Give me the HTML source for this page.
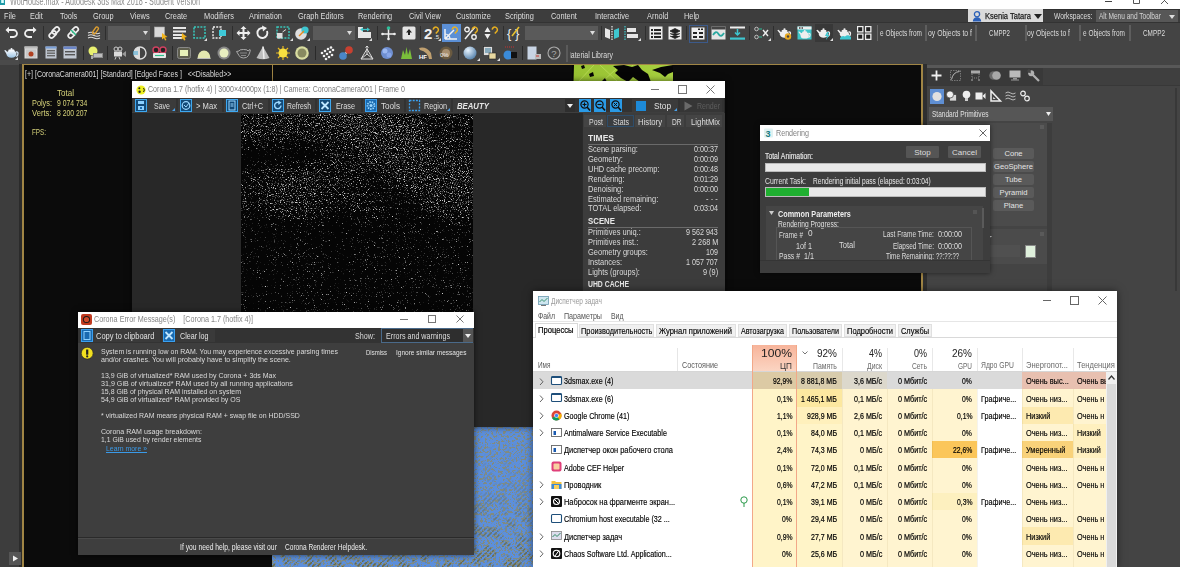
<!DOCTYPE html><html><head><meta charset="utf-8"><style>
*{margin:0;padding:0;box-sizing:border-box}
html,body{width:1180px;height:567px;overflow:hidden;background:#444;font-family:"Liberation Sans",sans-serif;position:relative}
.a{position:absolute}
.t{position:absolute;white-space:nowrap;line-height:1}
svg{overflow:visible}
</style></head><body><div class="a" style="left:0px;top:0px;width:1180px;height:9px;background:#fff;"></div>
<div class="t" style="left:10.3px;top:-3.4px;font-size:10px;color:#8c8c8c;transform:scaleX(0.722);transform-origin:0 0;">WotHouse.max - Autodesk 3ds Max 2018 - Student Version</div>
<svg class="a" style="left:0px;top:0px;" width="6" height="9" viewBox="0 0 6 9"><rect x="0" y="-3" width="5" height="8" fill="#1f9aa8"/><rect x="1.2" y="-1" width="2.6" height="4" fill="#dff"/></svg>
<svg class="a" style="left:1100px;top:0px;" width="75" height="9" viewBox="0 0 75 9"><path d="M5 1.5 H12" stroke="#444" stroke-width="1"/><path d="M33.5 -3 V3.5 H39.5 V-3" fill="none" stroke="#555" stroke-width="1"/><path d="M61 -3 L68 4 M68 -3 L61 4" stroke="#555" stroke-width="1"/></svg>
<div class="a" style="left:0px;top:9px;width:1180px;height:14px;background:#3d3d3d;"></div>
<div class="a" style="left:0px;top:9px;width:1180px;height:1px;background:#303030;"></div>
<div class="t" style="left:4px;top:11.5px;font-size:8.8px;color:#dedede;transform:scaleX(0.840);transform-origin:0 0;">File</div>
<div class="t" style="left:30px;top:11.5px;font-size:8.8px;color:#dedede;transform:scaleX(0.840);transform-origin:0 0;">Edit</div>
<div class="t" style="left:60px;top:11.5px;font-size:8.8px;color:#dedede;transform:scaleX(0.840);transform-origin:0 0;">Tools</div>
<div class="t" style="left:93px;top:11.5px;font-size:8.8px;color:#dedede;transform:scaleX(0.840);transform-origin:0 0;">Group</div>
<div class="t" style="left:130px;top:11.5px;font-size:8.8px;color:#dedede;transform:scaleX(0.840);transform-origin:0 0;">Views</div>
<div class="t" style="left:165px;top:11.5px;font-size:8.8px;color:#dedede;transform:scaleX(0.840);transform-origin:0 0;">Create</div>
<div class="t" style="left:204px;top:11.5px;font-size:8.8px;color:#dedede;transform:scaleX(0.840);transform-origin:0 0;">Modifiers</div>
<div class="t" style="left:249px;top:11.5px;font-size:8.8px;color:#dedede;transform:scaleX(0.840);transform-origin:0 0;">Animation</div>
<div class="t" style="left:298px;top:11.5px;font-size:8.8px;color:#dedede;transform:scaleX(0.840);transform-origin:0 0;">Graph Editors</div>
<div class="t" style="left:358px;top:11.5px;font-size:8.8px;color:#dedede;transform:scaleX(0.840);transform-origin:0 0;">Rendering</div>
<div class="t" style="left:409px;top:11.5px;font-size:8.8px;color:#dedede;transform:scaleX(0.840);transform-origin:0 0;">Civil View</div>
<div class="t" style="left:456px;top:11.5px;font-size:8.8px;color:#dedede;transform:scaleX(0.840);transform-origin:0 0;">Customize</div>
<div class="t" style="left:505px;top:11.5px;font-size:8.8px;color:#dedede;transform:scaleX(0.840);transform-origin:0 0;">Scripting</div>
<div class="t" style="left:551px;top:11.5px;font-size:8.8px;color:#dedede;transform:scaleX(0.840);transform-origin:0 0;">Content</div>
<div class="t" style="left:595px;top:11.5px;font-size:8.8px;color:#dedede;transform:scaleX(0.840);transform-origin:0 0;">Interactive</div>
<div class="t" style="left:647px;top:11.5px;font-size:8.8px;color:#dedede;transform:scaleX(0.840);transform-origin:0 0;">Arnold</div>
<div class="t" style="left:684px;top:11.5px;font-size:8.8px;color:#dedede;transform:scaleX(0.840);transform-origin:0 0;">Help</div>
<div class="a" style="left:968px;top:9px;width:75px;height:14px;background:#dadada;"></div>
<svg class="a" style="left:972px;top:11px;" width="10" height="11" viewBox="0 0 10 11"><circle cx="5" cy="3.2" r="2.6" fill="none" stroke="#2a5fb8" stroke-width="1.3"/><path d="M0.8 10.5 Q1 6.5 5 6.3 Q9 6.5 9.2 10.5 Z" fill="#2a5fb8"/></svg>
<div class="t" style="left:985px;top:11.5px;font-size:9px;color:#1a1a1a;transform:scaleX(0.838);transform-origin:0 0;-webkit-text-stroke:0.25px #1a1a1a">Ksenia Tatara</div>
<svg class="a" style="left:1034px;top:14px;" width="8" height="5" viewBox="0 0 8 5"><path d="M0 0 L8 0 L4 5 Z" fill="#222"/></svg>
<div class="t" style="left:1054px;top:12px;font-size:8.4px;color:#dcdcdc;transform:scaleX(0.796);transform-origin:0 0;">Workspaces:</div>
<div class="a" style="left:1096px;top:10px;width:82px;height:12px;background:#575757;"></div>
<div class="t" style="left:1099px;top:12px;font-size:8.4px;color:#d4d4d4;transform:scaleX(0.783);transform-origin:0 0;">Alt Menu and Toolbar</div>
<svg class="a" style="left:1169px;top:15px;" width="6" height="4" viewBox="0 0 6 4"><path d="M0 0 L6 0 L3 4 Z" fill="#ddd"/></svg>
<div class="a" style="left:0px;top:23px;width:1180px;height:41px;background:#444;"></div>
<div class="a" style="left:0px;top:22px;width:1180px;height:1px;background:#333;"></div>
<div class="a" style="left:0px;top:64px;width:19px;height:503px;background:#3d3d3d;"></div>
<div class="a" style="left:0px;top:60px;width:19px;height:5px;background:#4a4a4a;"></div>
<div class="a" style="left:19px;top:64px;width:3px;height:503px;background:#2b2b2b;"></div>
<svg class="a" style="left:9px;top:552px;" width="12" height="13" viewBox="0 0 12 13"><rect x="0" y="0" width="12" height="13" fill="#555"/><path d="M4 3.5 L9 6.5 L4 9.5 Z" fill="#eee"/></svg>
<div class="a" style="left:22px;top:64px;width:901px;height:503px;background:#0b0b0b;"></div>
<div class="a" style="left:22px;top:64px;width:901px;height:1px;background:#a08545;"></div>
<div class="a" style="left:22px;top:64px;width:2px;height:503px;background:#a08545;"></div>
<div class="a" style="left:921px;top:64px;width:2px;height:503px;background:#a08545;"></div>
<div class="a" style="left:272px;top:65px;width:1px;height:20px;background:#a08545;"></div>
<div class="a" style="left:923px;top:64px;width:257px;height:503px;background:#444;"></div>
<div class="a" style="left:923px;top:64px;width:4px;height:227px;background:#2f2f2f;"></div>
<svg class="a" style="left:5px;top:26px;" width="13" height="13" viewBox="0 0 13 13"><path d="M3 4 H8.5 A3.5 3.5 0 0 1 8.5 11 H5" fill="none" stroke="#eee" stroke-width="1.8"/><path d="M0.5 4 L4 0.8 L4 7.2 Z" fill="#eee"/></svg>
<svg class="a" style="left:24px;top:26px;" width="13" height="13" viewBox="0 0 13 13"><path d="M10 4 H4.5 A3.5 3.5 0 0 0 4.5 11 H8" fill="none" stroke="#eee" stroke-width="1.8"/><path d="M12.5 4 L9 0.8 L9 7.2 Z" fill="#eee"/></svg>
<div class="a" style="left:43px;top:26px;width:1px;height:14px;background:#2e2e2e;"></div>
<svg class="a" style="left:48px;top:26px;" width="13" height="13" viewBox="0 0 13 13"><g fill="none" stroke="#eee" stroke-width="1.7"><rect x="5.5" y="0.5" width="4.5" height="8" rx="2.2" transform="rotate(45 7.7 4.5)"/><rect x="2.5" y="4.5" width="4.5" height="8" rx="2.2" transform="rotate(45 4.7 8.5)"/></g></svg>
<svg class="a" style="left:67px;top:26px;" width="13" height="13" viewBox="0 0 13 13"><g fill="none" stroke="#eee" stroke-width="1.7"><rect x="5.5" y="0.5" width="4.5" height="8" rx="2.2" transform="rotate(45 7.7 4.5)"/><rect x="2.5" y="4.5" width="4.5" height="8" rx="2.2" transform="rotate(45 4.7 8.5)"/></g><path d="M4 4 L9 9" stroke="#2bbf8a" stroke-width="1.4"/></svg>
<svg class="a" style="left:87px;top:26px;" width="14" height="14" viewBox="0 0 14 14"><g fill="none" stroke="#ddd" stroke-width="1.1"><path d="M1 7 Q4 5.5 7 7 T13 7"/><path d="M1 9.5 Q4 8 7 9.5 T13 9.5"/><path d="M1 12 Q4 10.5 7 12 T13 12"/></g><rect x="7" y="0.5" width="3" height="8" rx="1.5" transform="rotate(35 8.5 4.5)" fill="none" stroke="#e0a030" stroke-width="1.4"/></svg>
<div class="a" style="left:105px;top:26px;width:1px;height:14px;background:#2e2e2e;"></div>
<div class="a" style="left:108px;top:26px;width:42px;height:14px;background:#5a5a5a;"></div>
<svg class="a" style="left:143px;top:31px;" width="5" height="4" viewBox="0 0 5 4"><path d="M0 0 L5 0 L2.5 4 Z" fill="#ddd"/></svg>
<svg class="a" style="left:154px;top:26px;" width="14" height="14" viewBox="0 0 14 14"><rect x="0.5" y="1" width="10" height="10" fill="#d8d8d8" stroke="#aaa" stroke-width="0.6"/><path d="M8 7 L13.5 11 L11 11.5 L12.5 14 L11 14.5 L10 12 L8 13.5 Z" fill="#f3b51c"/></svg>
<svg class="a" style="left:173px;top:26px;" width="14" height="14" viewBox="0 0 14 14"><g fill="#e6e6e6"><rect x="0" y="1" width="13" height="2"/><rect x="0" y="4.5" width="13" height="2"/><rect x="0" y="8" width="9" height="2"/><rect x="0" y="11" width="9" height="2"/></g><path d="M9 7 L14 11 L11.5 11.5 L12.5 14 L11 14.5 L10 12.5 L8.5 13.5 Z" fill="#f3b51c"/></svg>
<svg class="a" style="left:193px;top:26px;" width="14" height="14" viewBox="0 0 14 14"><rect x="1" y="1" width="11" height="11" fill="none" stroke="#38c4b8" stroke-width="1.6" stroke-dasharray="2 1.2"/></svg>
<svg class="a" style="left:204px;top:38px;" width="3" height="3" viewBox="0 0 3 3"><path d="M3 0 L3 3 L0 3 Z" fill="#ddd"/></svg>
<svg class="a" style="left:212px;top:26px;" width="15" height="14" viewBox="0 0 15 14"><rect x="1" y="1" width="8" height="11" fill="none" stroke="#eee" stroke-width="1.4" stroke-dasharray="2 1.2"/><rect x="7" y="4" width="7" height="6" fill="#3ec8d8"/></svg>
<div class="a" style="left:232px;top:26px;width:1px;height:14px;background:#2e2e2e;"></div>
<svg class="a" style="left:236px;top:26px;" width="15" height="14" viewBox="0 0 15 14"><g fill="#eee"><path d="M7.5 0 L10.5 3 L8.5 3 L8.5 6 L11.5 6 L11.5 4 L14.5 7 L11.5 10 L11.5 8 L8.5 8 L8.5 11 L10.5 11 L7.5 14 L4.5 11 L6.5 11 L6.5 8 L3.5 8 L3.5 10 L0.5 7 L3.5 4 L3.5 6 L6.5 6 L6.5 3 L4.5 3 Z"/></g></svg>
<svg class="a" style="left:256px;top:26px;" width="14" height="14" viewBox="0 0 14 14"><path d="M11 5 A5 5 0 1 1 7 2" fill="none" stroke="#eee" stroke-width="1.9"/><path d="M6 -0.5 L11 2 L7 5.5 Z" fill="#eee"/></svg>
<svg class="a" style="left:276px;top:26px;" width="15" height="14" viewBox="0 0 15 14"><rect x="1" y="1" width="12" height="11" fill="none" stroke="#38c4b8" stroke-width="1.5" stroke-dasharray="2 1.2"/><rect x="1" y="7" width="5.5" height="5.5" fill="#ddd"/><path d="M6.5 6 L10 3.5" stroke="#ddd" stroke-width="1"/></svg>
<svg class="a" style="left:290px;top:38px;" width="3" height="3" viewBox="0 0 3 3"><path d="M3 0 L3 3 L0 3 Z" fill="#ddd"/></svg>
<svg class="a" style="left:295px;top:26px;" width="14" height="14" viewBox="0 0 14 14"><circle cx="6" cy="8" r="5.8" fill="#dedede"/><circle cx="10" cy="4" r="3.6" fill="#3ec6d0"/><path d="M4 10 L9 5" stroke="#e88a20" stroke-width="1.5"/></svg>
<svg class="a" style="left:307px;top:38px;" width="3" height="3" viewBox="0 0 3 3"><path d="M3 0 L3 3 L0 3 Z" fill="#ddd"/></svg>
<div class="a" style="left:313px;top:26px;width:42px;height:14px;background:#5a5a5a;"></div>
<svg class="a" style="left:347px;top:31px;" width="5" height="4" viewBox="0 0 5 4"><path d="M0 0 L5 0 L2.5 4 Z" fill="#ddd"/></svg>
<svg class="a" style="left:358px;top:26px;" width="14" height="13" viewBox="0 0 14 13"><rect x="0" y="1" width="13" height="11" fill="#e6e6e6"/><rect x="5" y="1" width="8" height="5" fill="#444"/><path d="M4 3.5 H10" stroke="#3ec6c9" stroke-width="1.2"/><path d="M2 3.5 L5 1.5 L5 5.5Z M12 3.5 L9 1.5 L9 5.5Z" fill="#3ec6c9"/></svg>
<svg class="a" style="left:369px;top:38px;" width="3" height="3" viewBox="0 0 3 3"><path d="M3 0 L3 3 L0 3 Z" fill="#ddd"/></svg>
<div class="a" style="left:377px;top:26px;width:1px;height:14px;background:#2e2e2e;"></div>
<svg class="a" style="left:381px;top:26px;" width="15" height="14" viewBox="0 0 15 14"><path d="M7.5 1 V13 M1.5 8 H13.5" stroke="#eee" stroke-width="1.5"/><circle cx="7.5" cy="2" r="1.8" fill="#2dbf9a"/><circle cx="7.5" cy="13" r="1.3" fill="#eee"/><circle cx="1.5" cy="8" r="1.3" fill="#eee"/><circle cx="13.5" cy="8" r="1.3" fill="#eee"/></svg>
<svg class="a" style="left:402px;top:26px;" width="14" height="14" viewBox="0 0 14 14"><rect x="0.5" y="0.5" width="13" height="13" rx="1.5" fill="#e4e4e4"/><path d="M7 3 L10 6.5 L8 6.5 L8 9 L6 9 L6 6.5 L4 6.5 Z" fill="#222"/></svg>
<div class="a" style="left:420px;top:26px;width:1px;height:14px;background:#2e2e2e;"></div>
<svg class="a" style="left:424px;top:26px;" width="17" height="14" viewBox="0 0 17 14"><text x="0" y="13" font-family="Liberation Sans" font-weight="bold" font-size="15" fill="#eee">2</text><text x="10" y="13" font-family="Liberation Sans" font-size="6" fill="#eee">.5</text><path d="M9.2 3.6 A2.6 2.6 0 1 1 13.6 5.6 L11.8 7.6" fill="none" stroke="#e8b020" stroke-width="1.5"/></svg>
<svg class="a" style="left:438px;top:38px;" width="3" height="3" viewBox="0 0 3 3"><path d="M3 0 L3 3 L0 3 Z" fill="#ddd"/></svg>
<div class="a" style="left:442px;top:24px;width:19px;height:18px;background:#5b8fd5;"></div>
<svg class="a" style="left:444px;top:26px;" width="15" height="14" viewBox="0 0 15 14"><path d="M1 13 H13 M1 13 L1 3 M1 13 L10 4" stroke="#f2f2f2" stroke-width="1.5" fill="none"/><path d="M1 8 A5 5 0 0 1 6 13" stroke="#f2f2f2" stroke-width="1.2" fill="none"/><path d="M8.2 3.6 A2.6 2.6 0 1 1 12.6 5.6 L10.8 7.6" fill="none" stroke="#e8b020" stroke-width="1.5"/></svg>
<svg class="a" style="left:464px;top:26px;" width="15" height="14" viewBox="0 0 15 14"><circle cx="3" cy="3.5" r="2.2" fill="none" stroke="#eee" stroke-width="1.4"/><circle cx="10" cy="11" r="2.2" fill="none" stroke="#eee" stroke-width="1.4"/><path d="M1 13 L11 1" stroke="#eee" stroke-width="1.5"/><path d="M8.2 3.6 A2.6 2.6 0 1 1 12.6 5.6 L10.8 7.6" fill="none" stroke="#e8b020" stroke-width="1.5"/></svg>
<svg class="a" style="left:484px;top:26px;" width="15" height="14" viewBox="0 0 15 14"><path d="M0.5 6 L3.5 1 L6.5 6 Z M0.5 8 L3.5 13 L6.5 8 Z" fill="#eee"/><path d="M8.2 3.6 A2.6 2.6 0 1 1 12.6 5.6 L10.8 7.6" fill="none" stroke="#e8b020" stroke-width="1.5"/></svg>
<div class="a" style="left:503px;top:26px;width:1px;height:14px;background:#2e2e2e;"></div>
<svg class="a" style="left:507px;top:26px;" width="14" height="14" viewBox="0 0 14 14"><text x="0" y="12" font-family="Liberation Sans" font-size="13" fill="#eee">{</text><text x="8" y="12" font-family="Liberation Sans" font-size="13" fill="#eee">}</text><path d="M5 10 L12 1" stroke="#e8c030" stroke-width="1.6"/></svg>
<div class="a" style="left:525px;top:26px;width:73px;height:14px;background:#5a5a5a;"></div>
<svg class="a" style="left:590px;top:31px;" width="5" height="4" viewBox="0 0 5 4"><path d="M0 0 L5 0 L2.5 4 Z" fill="#ddd"/></svg>
<div class="a" style="left:601px;top:26px;width:1px;height:14px;background:#2e2e2e;"></div>
<svg class="a" style="left:604px;top:26px;" width="16" height="14" viewBox="0 0 16 14"><path d="M1 2 L6 4 L6 13 L1 11 Z" fill="#e6e6e6"/><path d="M15 2 L10 4 L10 13 L15 11 Z" fill="#3ec6d0"/><path d="M8 0 V14" stroke="#eee" stroke-width="1.2" stroke-dasharray="1.5 1"/></svg>
<svg class="a" style="left:624px;top:26px;" width="17" height="14" viewBox="0 0 17 14"><path d="M1 0 V14" stroke="#3ec6c9" stroke-width="1.2" stroke-dasharray="1.5 1"/><rect x="3" y="2" width="9" height="4" fill="#e6e6e6"/><rect x="3" y="8" width="11" height="4" fill="#e6e6e6"/></svg>
<svg class="a" style="left:638px;top:38px;" width="3" height="3" viewBox="0 0 3 3"><path d="M3 0 L3 3 L0 3 Z" fill="#ddd"/></svg>
<div class="a" style="left:645px;top:26px;width:1px;height:14px;background:#2e2e2e;"></div>
<svg class="a" style="left:649px;top:26px;" width="14" height="14" viewBox="0 0 14 14"><rect x="0.5" y="0.5" width="13" height="13" fill="#eee"/><g fill="#222"><rect x="2" y="3" width="2" height="2"/><rect x="5" y="3" width="7" height="2"/><rect x="2" y="6.5" width="2" height="2"/><rect x="5" y="6.5" width="7" height="2"/><rect x="2" y="10" width="2" height="2"/><rect x="5" y="10" width="7" height="2"/></g></svg>
<svg class="a" style="left:668px;top:26px;" width="14" height="14" viewBox="0 0 14 14"><rect x="0.5" y="0.5" width="13" height="13" fill="#eee"/><path d="M7 2.5 L12 5 L7 7.5 L2 5 Z M2 7.5 L7 10 L12 7.5 M2 10 L7 12.5 L12 10" fill="#222" stroke="#222" stroke-width="0.8"/></svg>
<div class="a" style="left:686px;top:26px;width:1px;height:14px;background:#2e2e2e;"></div>
<div class="a" style="left:689px;top:25px;width:19px;height:18px;background:#3c5a8a;"></div>
<div class="a" style="left:690px;top:26px;width:17px;height:16px;background:#444;"></div>
<svg class="a" style="left:691px;top:27px;" width="14" height="13" viewBox="0 0 14 13"><rect x="0.5" y="0.5" width="13" height="12" fill="#eee"/><rect x="7" y="1.5" width="2" height="1.5" fill="#222"/><rect x="10" y="1.5" width="2" height="1.5" fill="#222"/><rect x="2" y="5" width="4" height="2" fill="#222"/><rect x="8" y="5" width="4" height="2" fill="#222"/><rect x="2" y="9" width="4" height="2" fill="#222"/><rect x="8" y="9" width="4" height="2" fill="#222"/></svg>
<svg class="a" style="left:711px;top:26px;" width="15" height="14" viewBox="0 0 15 14"><rect x="0.5" y="0.5" width="14" height="13" fill="#e6e6e6"/><rect x="0.5" y="0.5" width="14" height="3" fill="#444"/><path d="M2 9 Q5 4 7.5 8 T13 7" fill="none" stroke="#2aa8a0" stroke-width="1.8"/></svg>
<svg class="a" style="left:730px;top:26px;" width="15" height="14" viewBox="0 0 15 14"><rect x="0" y="0.5" width="15" height="2" fill="#eee"/><rect x="0" y="11.5" width="15" height="2.2" fill="#3ec6d0"/><path d="M7.5 3 V9 M5 6.5 L7.5 9 L10 6.5" stroke="#3ec6d0" stroke-width="1.5" fill="none"/></svg>
<div class="a" style="left:749px;top:26px;width:1px;height:14px;background:#2e2e2e;"></div>
<svg class="a" style="left:754px;top:26px;" width="16" height="14" viewBox="0 0 16 14"><circle cx="2.5" cy="3" r="1.8" fill="none" stroke="#ccc" stroke-width="0.9"/><circle cx="2.5" cy="11" r="1.8" fill="none" stroke="#ccc" stroke-width="0.9"/><path d="M5 3 H8 M5 11 H8" stroke="#2dbf9a" stroke-width="1"/><path d="M9 4 L14 10 M14 4 L9 10" stroke="#eee" stroke-width="1.4"/></svg>
<svg class="a" style="left:768px;top:38px;" width="3" height="3" viewBox="0 0 3 3"><path d="M3 0 L3 3 L0 3 Z" fill="#ddd"/></svg>
<div class="a" style="left:773px;top:26px;width:1px;height:14px;background:#2e2e2e;"></div>
<svg class="a" style="left:777px;top:26px;" width="16" height="14" viewBox="0 0 16 14"><ellipse cx="7.5" cy="8.2" rx="4.6" ry="3.6" fill="#eee"/><ellipse cx="7.5" cy="4.8" rx="3" ry="1.1" fill="#eee"/><circle cx="7.5" cy="3.3" r="1.1" fill="#eee"/><path d="M3.5 8.5 L0.3 4.2 L1.5 3.8 L4.5 6.5 Z" fill="#eee"/><path d="M11.5 6 Q14.5 5.5 13 9.5 L11.5 10.5" fill="none" stroke="#eee" stroke-width="1.3"/><circle cx="11" cy="10.5" r="3.2" fill="#e8a820"/><circle cx="11" cy="10.5" r="1.2" fill="#444"/></svg>
<svg class="a" style="left:797px;top:26px;" width="15" height="14" viewBox="0 0 15 14"><rect x="0.5" y="0.5" width="14" height="13" fill="#3ec6c9"/><rect x="0.5" y="0.5" width="14" height="3" fill="#eee"/><rect x="2" y="1.3" width="1.5" height="1.4" fill="#333"/><rect x="4.5" y="1.3" width="1.5" height="1.4" fill="#333"/><g transform="translate(1,2) scale(0.9)"><ellipse cx="7.5" cy="8.2" rx="4.6" ry="3.6" fill="#eee"/><ellipse cx="7.5" cy="4.8" rx="3" ry="1.1" fill="#eee"/><circle cx="7.5" cy="3.3" r="1.1" fill="#eee"/><path d="M3.5 8.5 L0.3 4.2 L1.5 3.8 L4.5 6.5 Z" fill="#eee"/><path d="M11.5 6 Q14.5 5.5 13 9.5 L11.5 10.5" fill="none" stroke="#eee" stroke-width="1.3"/></g></svg>
<div class="a" style="left:815px;top:24px;width:18px;height:18px;background:#383838;"></div>
<svg class="a" style="left:816px;top:26px;" width="16" height="14" viewBox="0 0 16 14"><ellipse cx="7.5" cy="8.2" rx="4.6" ry="3.6" fill="#eee"/><ellipse cx="7.5" cy="4.8" rx="3" ry="1.1" fill="#eee"/><circle cx="7.5" cy="3.3" r="1.1" fill="#eee"/><path d="M3.5 8.5 L0.3 4.2 L1.5 3.8 L4.5 6.5 Z" fill="#eee"/><path d="M11.5 6 Q14.5 5.5 13 9.5 L11.5 10.5" fill="none" stroke="#eee" stroke-width="1.3"/><path d="M11 6 L9 10 L11 10 L10 14 L13.5 9 L11.5 9 L13 6 Z" fill="#3ec6d0"/></svg>
<svg class="a" style="left:830px;top:38px;" width="3" height="3" viewBox="0 0 3 3"><path d="M3 0 L3 3 L0 3 Z" fill="#ddd"/></svg>
<svg class="a" style="left:837px;top:26px;" width="15" height="14" viewBox="0 0 15 14"><ellipse cx="7.5" cy="8.2" rx="4.6" ry="3.6" fill="#eee"/><ellipse cx="7.5" cy="4.8" rx="3" ry="1.1" fill="#eee"/><circle cx="7.5" cy="3.3" r="1.1" fill="#eee"/><path d="M3.5 8.5 L0.3 4.2 L1.5 3.8 L4.5 6.5 Z" fill="#eee"/><path d="M11.5 6 Q14.5 5.5 13 9.5 L11.5 10.5" fill="none" stroke="#eee" stroke-width="1.3"/><path d="M3 12 Q5 9 8 10.5 Q11 8 14 11 L14 13.5 L3 13.5 Z" fill="#3ec6d0"/></svg>
<svg class="a" style="left:857px;top:26px;" width="15" height="14" viewBox="0 0 15 14"><g fill="#eee"><rect x="0" y="0" width="6.5" height="6.5"/><rect x="8" y="0" width="6.5" height="6.5"/><rect x="0" y="7.5" width="6.5" height="6.5"/><rect x="8" y="7.5" width="6.5" height="6.5"/></g><g fill="#222"><rect x="1.2" y="1.2" width="4" height="4"/><rect x="9.2" y="1.2" width="4" height="4"/><rect x="1.2" y="8.7" width="4" height="4"/><rect x="9.2" y="8.7" width="4" height="4"/></g></svg>
<div class="a" style="left:877px;top:25px;width:1px;height:16px;background:#666;"></div>
<div class="t" style="left:880px;top:29px;font-size:8.6px;color:#dcdcdc;transform:scaleX(0.751);transform-origin:0 0;">e Objects from</div>
<div class="t" style="left:928px;top:29px;font-size:8.6px;color:#dcdcdc;transform:scaleX(0.800);transform-origin:0 0;">oy Objects to f</div>
<div class="t" style="left:989px;top:29px;font-size:8.6px;color:#dcdcdc;transform:scaleX(0.709);transform-origin:0 0;">CMPP2</div>
<div class="t" style="left:1027px;top:29px;font-size:8.6px;color:#dcdcdc;transform:scaleX(0.782);transform-origin:0 0;">oy Objects to f</div>
<div class="t" style="left:1083px;top:29px;font-size:8.6px;color:#dcdcdc;transform:scaleX(0.751);transform-origin:0 0;">e Objects from</div>
<div class="t" style="left:1143px;top:29px;font-size:8.6px;color:#dcdcdc;transform:scaleX(0.742);transform-origin:0 0;">CMPP2</div>
<div class="a" style="left:925px;top:25px;width:1.5px;height:16px;background:#5e5e5e;"></div>
<div class="a" style="left:975px;top:25px;width:1.5px;height:16px;background:#5e5e5e;"></div>
<div class="a" style="left:1025px;top:25px;width:1.5px;height:16px;background:#5e5e5e;"></div>
<div class="a" style="left:1079px;top:25px;width:1.5px;height:16px;background:#5e5e5e;"></div>
<div class="a" style="left:1129px;top:25px;width:1.5px;height:16px;background:#5e5e5e;"></div>
<svg class="a" style="left:4px;top:46px;" width="15" height="13" viewBox="0 0 15 13"><defs><linearGradient id="tpg" x1="0" y1="0" x2="0" y2="1"><stop offset="0" stop-color="#f4f8fc"/><stop offset="1" stop-color="#9cc4e4"/></linearGradient></defs><ellipse cx="7.5" cy="8" rx="5" ry="3.8" fill="url(#tpg)"/><ellipse cx="7.5" cy="4.4" rx="3.2" ry="1.1" fill="#f4f8fc"/><circle cx="7.5" cy="3" r="1" fill="#f4f8fc"/><path d="M3 8.5 L0.2 4.5 L1.4 4 L4 6.5 Z" fill="#dde8f4"/><path d="M12 6 Q15 5.5 13.5 9.5 L12 10.5" fill="none" stroke="#cfe0f0" stroke-width="1.3"/></svg>
<svg class="a" style="left:15px;top:57px;" width="3" height="3" viewBox="0 0 3 3"><path d="M3 0 L3 3 L0 3 Z" fill="#ddd"/></svg>
<svg class="a" style="left:24px;top:46px;" width="14" height="13" viewBox="0 0 14 13"><rect x="0.5" y="0.5" width="13" height="12" fill="#d9d9d9"/><rect x="0.5" y="0.5" width="13" height="2" fill="#bbb"/><rect x="2" y="3.5" width="10" height="8" fill="#c8c8c8"/><circle cx="7" cy="8" r="2.5" fill="#b04020"/></svg>
<svg class="a" style="left:45px;top:46px;" width="12" height="13" viewBox="0 0 12 13"><rect x="0.5" y="0.5" width="11" height="12" fill="#bfc6d0"/><rect x="0.5" y="0.5" width="11" height="2" fill="#7aa0d8"/><g fill="#666"><rect x="2" y="4" width="8" height="1.4"/><rect x="2" y="6.5" width="8" height="1.4"/><rect x="2" y="9" width="8" height="1.4"/></g></svg>
<svg class="a" style="left:63px;top:46px;" width="14" height="13" viewBox="0 0 14 13"><rect x="0.5" y="0.5" width="13" height="12" fill="#c2c8d2"/><rect x="0.5" y="0.5" width="13" height="2.5" fill="#6b86c8"/><g fill="#555"><rect x="2" y="5" width="10" height="1.4"/><rect x="2" y="8" width="10" height="1.4"/></g></svg>
<div class="a" style="left:83px;top:46px;width:1px;height:14px;background:#2a2a2a;"></div>
<svg class="a" style="left:88px;top:46px;" width="15" height="14" viewBox="0 0 15 14"><circle cx="5" cy="5" r="4.5" fill="#e8f070"/><rect x="5" y="7" width="10" height="5" fill="#8a8a8a"/><rect x="6" y="8" width="8" height="3" fill="#bdbdbd"/><path d="M4 10 V13" stroke="#ccc" stroke-width="1.5"/></svg>
<div class="a" style="left:107px;top:46px;width:1px;height:14px;background:#2a2a2a;"></div>
<svg class="a" style="left:112px;top:46px;" width="15" height="14" viewBox="0 0 15 14"><circle cx="4" cy="3" r="2" fill="none" stroke="#ccc" stroke-width="1"/><circle cx="8" cy="3" r="2" fill="none" stroke="#ccc" stroke-width="1"/><rect x="2" y="5.5" width="8" height="5" fill="#ddd"/><path d="M10 8 L14 5 L14 11 Z" fill="#999"/><path d="M4 11 L3 13.5 M7 11 L8 13.5" stroke="#ccc"/></svg>
<svg class="a" style="left:132px;top:46px;" width="15" height="14" viewBox="0 0 15 14"><circle cx="8" cy="7" r="6" fill="none" stroke="#ddd" stroke-width="1.4"/><path d="M8 1 A6 6 0 0 0 8 13 Z" fill="#ddd"/><path d="M1 6 H6 M1 8 H6" stroke="#3ea8d8" stroke-width="1.2"/></svg>
<svg class="a" style="left:152px;top:46px;" width="15" height="14" viewBox="0 0 15 14"><circle cx="4" cy="4" r="3" fill="#222" stroke="#d04060" stroke-width="1.4"/><circle cx="11" cy="4" r="3" fill="#222" stroke="#d04060" stroke-width="1.4"/><rect x="1" y="7" width="13" height="5" rx="1" fill="#e8e8e8"/><path d="M3 9.5 H12" stroke="#2bbf8a" stroke-width="1.2"/></svg>
<div class="a" style="left:172px;top:46px;width:1px;height:14px;background:#2a2a2a;"></div>
<svg class="a" style="left:177px;top:46px;" width="14" height="14" viewBox="0 0 14 14"><rect x="0.5" y="1.5" width="13" height="11" rx="2" fill="#5e5e4e" stroke="#888" stroke-width="1"/><rect x="3" y="4" width="8" height="6" fill="#e6f0b8"/></svg>
<svg class="a" style="left:197px;top:46px;" width="14" height="14" viewBox="0 0 14 14"><path d="M0.5 12.5 A6.5 8 0 0 1 13.5 12.5 Z" fill="#e4e8b0"/><path d="M0.5 12.5 H13.5" stroke="#bbb"/></svg>
<svg class="a" style="left:217px;top:46px;" width="14" height="14" viewBox="0 0 14 14"><circle cx="7" cy="7" r="6.5" fill="#888"/><circle cx="7" cy="7" r="4.5" fill="#e8eec0"/></svg>
<svg class="a" style="left:236px;top:46px;" width="15" height="14" viewBox="0 0 15 14"><path d="M3 5 Q3 3.5 7.5 3.5 Q12 3.5 12 5 L14 3.5 Q15 4 12.5 9.5 Q11 12 7.5 12 Q4 12 3 9.5 L0.5 5.5 Z" fill="none" stroke="#aaa" stroke-width="1"/><path d="M4 7 H11 M5 9.5 H10" stroke="#999" stroke-width="0.8"/></svg>
<svg class="a" style="left:256px;top:46px;" width="14" height="14" viewBox="0 0 14 14"><path d="M7 0.5 L13.5 12 Q7 14.5 0.5 12 Z" fill="#bdbdbd"/><path d="M7 0.5 L8 13" stroke="#eee" stroke-width="1.5"/></svg>
<svg class="a" style="left:276px;top:46px;" width="14" height="14" viewBox="0 0 14 14"><g stroke="#e8b820" stroke-width="1.2"><path d="M7 0 V14 M0 7 H14 M2 2 L12 12 M12 2 L2 12"/></g><circle cx="7" cy="7" r="4.5" fill="#f8e040"/></svg>
<svg class="a" style="left:295px;top:46px;" width="14" height="14" viewBox="0 0 14 14"><circle cx="7" cy="7" r="6.8" fill="#d8dca0"/><circle cx="7" cy="7" r="4.5" fill="#888a60"/></svg>
<div class="a" style="left:315px;top:46px;width:1px;height:14px;background:#2a2a2a;"></div>
<svg class="a" style="left:320px;top:46px;" width="14" height="14" viewBox="0 0 14 14"><g fill="#eee"><circle cx="2" cy="7" r="1.3"/><circle cx="5" cy="5" r="1.3"/><circle cx="8" cy="3" r="1.3"/><circle cx="11" cy="1.5" r="1.3"/><circle cx="4" cy="10" r="1.3"/><circle cx="7" cy="8" r="1.3"/><circle cx="10" cy="6" r="1.3"/><circle cx="13" cy="4" r="1.3"/><circle cx="6" cy="13" r="1.3"/><circle cx="9" cy="11" r="1.3"/><circle cx="12" cy="9" r="1.3"/></g></svg>
<svg class="a" style="left:339px;top:46px;" width="14" height="14" viewBox="0 0 14 14"><path d="M4 10 L10 4" stroke="#ccc" stroke-width="2"/><circle cx="4" cy="10" r="3.8" fill="#4a86c8"/><circle cx="10" cy="4" r="3.8" fill="#c84030"/></svg>
<svg class="a" style="left:360px;top:46px;" width="14" height="14" viewBox="0 0 14 14"><path d="M7 3 L13 13 H1 Z M1 13 L7 8 L13 13 M7 3 V8" fill="none" stroke="#ddd" stroke-width="1"/><path d="M7 0 V4 M5.5 1.5 L7 0 L8.5 1.5" stroke="#ddd" fill="none"/></svg>
<svg class="a" style="left:380px;top:46px;" width="14" height="14" viewBox="0 0 14 14"><circle cx="7" cy="7" r="6" fill="#6e8ed0"/><circle cx="5" cy="5" r="2.5" fill="#9cb8f0"/><circle cx="9" cy="9" r="2.5" fill="#88a6e8"/></svg>
<svg class="a" style="left:400px;top:46px;" width="13" height="14" viewBox="0 0 13 14"><path d="M1 13 L3 4 L5 9 L6.5 1 L8 9 L10 3 L12 13 Z" fill="#7abf3a"/></svg>
<svg class="a" style="left:418px;top:46px;" width="15" height="14" viewBox="0 0 15 14"><path d="M1 2 Q8 0 13 7 L14 13 L11 13 Q10 6 2 4 Z" fill="#c0a070"/><text x="1" y="13" font-family="Liberation Sans" font-weight="bold" font-size="6" fill="#fff">HF</text></svg>
<svg class="a" style="left:439px;top:46px;" width="14" height="14" viewBox="0 0 14 14"><circle cx="7" cy="7" r="6.5" fill="#6a5a40"/><circle cx="7" cy="7" r="4" fill="#a89070"/><text x="1" y="11" font-family="Liberation Sans" font-size="6" fill="#eee">0%</text></svg>
<div class="a" style="left:458px;top:46px;width:1px;height:14px;background:#2a2a2a;"></div>
<svg class="a" style="left:463px;top:46px;" width="14" height="14" viewBox="0 0 14 14"><defs><radialGradient id="gs" cx="0.35" cy="0.3" r="0.7"><stop offset="0" stop-color="#e8f4ff"/><stop offset="1" stop-color="#5e88b0"/></radialGradient></defs><circle cx="7" cy="7" r="6.5" fill="url(#gs)"/></svg>
<svg class="a" style="left:477px;top:58px;" width="3" height="3" viewBox="0 0 3 3"><path d="M3 0 L3 3 L0 3 Z" fill="#ddd"/></svg>
<svg class="a" style="left:483px;top:46px;" width="14" height="14" viewBox="0 0 14 14"><rect x="0.5" y="0.5" width="9" height="9" fill="#ddd" stroke="#222" stroke-width="0.6"/><rect x="2" y="2" width="6" height="5" fill="#8ab"/><rect x="6" y="7" width="7" height="6" fill="#e8d8a0" stroke="#222" stroke-width="0.6"/></svg>
<svg class="a" style="left:497px;top:58px;" width="3" height="3" viewBox="0 0 3 3"><path d="M3 0 L3 3 L0 3 Z" fill="#ddd"/></svg>
<svg class="a" style="left:502px;top:46px;" width="16" height="14" viewBox="0 0 16 14"><path d="M3 1 H13" stroke="#c83030" stroke-dasharray="1 1"/><circle cx="6" cy="9" r="4.5" fill="#3a8ad8"/><rect x="9" y="6" width="6" height="6" fill="#111"/></svg>
<div class="a" style="left:522px;top:46px;width:1px;height:14px;background:#2a2a2a;"></div>
<svg class="a" style="left:527px;top:46px;" width="14" height="14" viewBox="0 0 14 14"><rect x="0.5" y="0.5" width="9" height="13" fill="#c8d4e4"/><rect x="8" y="8" width="6" height="5" fill="#bbb"/><path d="M9 10 L12 10" stroke="#c33"/></svg>
<svg class="a" style="left:547px;top:46px;" width="14" height="14" viewBox="0 0 14 14"><circle cx="7" cy="7" r="6" fill="none" stroke="#aaa" stroke-width="1.1"/><text x="4.3" y="10.5" font-family="Liberation Sans" font-size="9.5" fill="#aaa">?</text></svg>
<div class="a" style="left:566px;top:45px;width:1.5px;height:17px;background:#5a5a5a;"></div>
<div class="a" style="left:570px;top:49px;width:47px;height:12px;overflow:hidden">
<div class="t" style="left:-5px;top:1.6px;font-size:8.6px;color:#dcdcdc;transform:scaleX(0.810);transform-origin:0 0;">Material Library</div>
</div>
<div class="t" style="left:25px;top:70px;font-size:8.4px;color:#dcdcdc;transform:scaleX(0.837);transform-origin:0 0;">[+] [CoronaCamera001] [Standard] [Edged Faces ]&nbsp;&nbsp; &lt;&lt;Disabled&gt;&gt;</div>
<div class="t" style="left:57px;top:89px;font-size:8.4px;color:#d6d27a;transform:scaleX(0.958);transform-origin:0 0;">Total</div>
<div class="t" style="left:32px;top:99px;font-size:8.4px;color:#d6d27a;transform:scaleX(0.874);transform-origin:0 0;">Polys:</div>
<div class="t" style="left:57px;top:99px;font-size:8.4px;color:#d6d27a;transform:scaleX(0.816);transform-origin:0 0;">9 074 734</div>
<div class="t" style="left:32px;top:109px;font-size:8.4px;color:#d6d27a;transform:scaleX(0.908);transform-origin:0 0;">Verts:</div>
<div class="t" style="left:57px;top:109px;font-size:8.4px;color:#d6d27a;transform:scaleX(0.816);transform-origin:0 0;">8 200 207</div>
<div class="t" style="left:32px;top:128px;font-size:8.4px;color:#d6d27a;transform:scaleX(0.750);transform-origin:0 0;">FPS:</div>
<svg class="a" style="left:572px;top:65px;overflow:hidden" width="101" height="17" viewBox="0 0 101 17"><defs><linearGradient id="lg" x1="0" x2="1"><stop offset="0" stop-color="#98c232"/><stop offset="1" stop-color="#a8d040"/></linearGradient></defs><rect width="101" height="17" fill="url(#lg)"/><g stroke="#c0e060" stroke-width="0.9" opacity="0.8"><path d="M6 17 L22 0 M28 0 L46 17 M60 0 L80 17 M30 17 L44 4"/></g><g fill="#050505"><path d="M41 1 L52 0 L60 2 L66 0 L70 5 L76 9 L79 17 L68 17 L61 12 L56 17 L49 13 L43 8 L46 5 Z"/><path d="M80 5 L89 2 L101 0 L101 7 L96 9 L93 12 L88 8 Z"/><path d="M9 1 L12 0 L13 3 L10 4 Z"/><path d="M17 9 L21 7 L22 11 L18 12 Z"/><path d="M30 16 L33 13 L35 17 Z"/><path d="M0 0 L2 0 L1.5 17 L0 17 Z"/></g></svg>
<svg class="a" style="left:272px;top:427px;" width="261" height="140" viewBox="0 0 261 140"><defs><filter id="bl" x="0" y="0" width="100%" height="100%"><feTurbulence type="fractalNoise" baseFrequency="0.45" numOctaves="2" seed="11"/><feColorMatrix type="matrix" values="0 0 0 0 0.22  0 0 0 0 0.26  0 0 0 0 0.22  -20 0 0 0 8.9"/></filter>
<filter id="bl2" x="0" y="0" width="100%" height="100%"><feTurbulence type="fractalNoise" baseFrequency="0.09" numOctaves="2" seed="5"/><feColorMatrix type="matrix" values="0 0 0 0 1  0 0 0 0 1  0 0 0 0 1  -8 0 0 0 4.3"/></filter>
<pattern id="hp" width="5" height="5" patternUnits="userSpaceOnUse"><path d="M-1 6 L6 -1" stroke="#6e6a3c" stroke-width="1.6"/></pattern>
<linearGradient id="bg1" x1="0" y1="0" x2="0" y2="1"><stop offset="0" stop-color="#000"/><stop offset="0.35" stop-color="#333"/><stop offset="1" stop-color="#fff"/></linearGradient>
<mask id="bm"><rect width="261" height="140" fill="url(#bg1)"/></mask>
<mask id="bm2"><rect width="261" height="140" filter="url(#bl2)"/></mask></defs>
<rect width="261" height="140" fill="#5c8fdc"/>
<g mask="url(#bm)"><rect width="261" height="140" fill="url(#hp)" mask="url(#bm2)"/></g>
<rect width="261" height="140" filter="url(#bl)"/></svg>
<div class="a" style="left:927px;top:65px;width:253px;height:3px;background:#585858;"></div>
<div class="a" style="left:927px;top:68px;width:116px;height:18px;background:#393939;"></div>
<div class="a" style="left:1043px;top:68px;width:137px;height:18px;background:#3f3f3f;"></div>
<svg class="a" style="left:931px;top:70px;" width="11" height="11" viewBox="0 0 11 11"><path d="M5.5 0.5 V10.5 M0.5 5.5 H10.5" stroke="#f0f0f0" stroke-width="1.8"/></svg>
<svg class="a" style="left:950px;top:70px;" width="11" height="12" viewBox="0 0 11 12"><rect x="0.5" y="0.5" width="10" height="10" fill="none" stroke="#888" stroke-width="0.8" stroke-dasharray="1.5 1"/><path d="M1.5 9.5 Q3 2 9.5 1.5" stroke="#bbb" stroke-width="1" fill="none"/></svg>
<svg class="a" style="left:970px;top:70px;" width="11" height="12" viewBox="0 0 11 12"><rect x="1" y="0.5" width="9" height="3" fill="#aaa"/><path d="M2 4 V8 M9 4 V8 M2 8 H9" stroke="#888" stroke-dasharray="1 1"/><circle cx="2" cy="10" r="1" fill="#888"/><circle cx="9" cy="10" r="1" fill="#888"/></svg>
<svg class="a" style="left:989px;top:70px;" width="12" height="11" viewBox="0 0 12 11"><circle cx="4.5" cy="5.5" r="4.3" fill="#6a6a6a"/><circle cx="7.5" cy="5.5" r="4.3" fill="#a8a8a8"/></svg>
<svg class="a" style="left:1009px;top:70px;" width="12" height="11" viewBox="0 0 12 11"><rect x="0.5" y="0.5" width="11" height="7" fill="#bbb"/><rect x="4" y="8" width="4" height="1.5" fill="#999"/><rect x="2" y="9.5" width="8" height="1" fill="#999"/></svg>
<svg class="a" style="left:1028px;top:70px;" width="12" height="12" viewBox="0 0 12 12"><path d="M4 4 L11 11" stroke="#b0b0b0" stroke-width="2.2"/><circle cx="3.2" cy="3.2" r="3" fill="#b0b0b0"/><path d="M0 2 L3 3.5 L2 0" fill="#444" transform="rotate(0)"/><rect x="0" y="0" width="3" height="3" fill="#444" transform="rotate(45 1.5 1.5) translate(-0.8 0)"/></svg>
<div class="a" style="left:930px;top:89px;width:14px;height:15px;background:#5f8fd3;"></div>
<svg class="a" style="left:931px;top:90px;" width="12" height="13" viewBox="0 0 12 13"><circle cx="6" cy="6.5" r="4.6" fill="#e0e0e0"/></svg>
<svg class="a" style="left:946px;top:90px;" width="11" height="12" viewBox="0 0 11 12"><rect x="3.5" y="4.5" width="7" height="6.5" fill="#d8d8d8" stroke="#3a3a3a" stroke-width="0.7"/><circle cx="4" cy="4.5" r="3.6" fill="#f0f0f0" stroke="#3a3a3a" stroke-width="0.7"/></svg>
<svg class="a" style="left:962px;top:90px;" width="9" height="12" viewBox="0 0 9 12"><circle cx="4.5" cy="4.5" r="3.8" fill="#eee"/><rect x="3" y="8" width="3" height="3" fill="#cfcfcf"/></svg>
<svg class="a" style="left:975px;top:91px;" width="11" height="10" viewBox="0 0 11 10"><rect x="0.5" y="1.5" width="7" height="7" fill="#eee"/><path d="M7.5 5 L10.5 2 V8 Z" fill="#eee"/></svg>
<svg class="a" style="left:990px;top:90px;" width="11" height="12" viewBox="0 0 11 12"><path d="M1 1 V11 H10.5 Z" fill="none" stroke="#eee" stroke-width="1.5"/><path d="M3.2 7 V9 H5.5 Z" fill="#eee"/></svg>
<svg class="a" style="left:1005px;top:90px;" width="11" height="12" viewBox="0 0 11 12"><g fill="none" stroke="#c8c8c8" stroke-width="0.9"><path d="M0.5 3 Q3 1 5.5 3 T10.5 3"/><path d="M0.5 6 Q3 4 5.5 6 T10.5 6"/><path d="M0.5 9 Q3 7 5.5 9 T10.5 9"/></g></svg>
<svg class="a" style="left:1020px;top:90px;" width="10" height="12" viewBox="0 0 10 12"><circle cx="3" cy="3.5" r="2.3" fill="none" stroke="#eee" stroke-width="1.2"/><circle cx="7" cy="8.5" r="2.3" fill="none" stroke="#eee" stroke-width="1.2"/></svg>
<div class="a" style="left:929px;top:107px;width:124px;height:14px;background:#565656;"></div>
<div class="t" style="left:931.5px;top:109.5px;font-size:8.8px;color:#e0e0e0;transform:scaleX(0.741);transform-origin:0 0;">Standard Primitives</div>
<svg class="a" style="left:1046px;top:112px;" width="5" height="4" viewBox="0 0 5 4"><path d="M0 0 L5 0 L2.5 4 Z" fill="#eee"/></svg>
<div class="a" style="left:927px;top:123px;width:120px;height:103px;background:#4b4b4b;"></div>
<div class="a" style="left:1040px;top:125px;width:4px;height:4px;background:#5a5a5a;"></div>
<div class="a" style="left:927px;top:229px;width:120px;height:35px;background:#4b4b4b;"></div>
<div class="a" style="left:1040px;top:232px;width:4px;height:4px;background:#5a5a5a;"></div>
<div class="a" style="left:1047px;top:123px;width:5px;height:168px;background:#3d3d3d;"></div>
<div class="a" style="left:1175px;top:88px;width:2px;height:203px;background:#383838;"></div>
<div class="a" style="left:927px;top:85px;width:253px;height:1px;background:#383838;"></div>
<div class="a" style="left:993px;top:148px;width:41px;height:11px;background:#5a5a5a;border-radius:2px"></div>
<div class="t" style="left:993px;width:41px;text-align:center;top:150px;font-size:7.6px;color:#e4e4e4">Cone</div>
<div class="a" style="left:993px;top:161px;width:41px;height:11px;background:#5a5a5a;border-radius:2px"></div>
<div class="t" style="left:993px;width:41px;text-align:center;top:163px;font-size:7.6px;color:#e4e4e4">GeoSphere</div>
<div class="a" style="left:993px;top:174px;width:41px;height:11px;background:#5a5a5a;border-radius:2px"></div>
<div class="t" style="left:993px;width:41px;text-align:center;top:176px;font-size:7.6px;color:#e4e4e4">Tube</div>
<div class="a" style="left:993px;top:187px;width:41px;height:11px;background:#5a5a5a;border-radius:2px"></div>
<div class="t" style="left:993px;width:41px;text-align:center;top:189px;font-size:7.6px;color:#e4e4e4">Pyramid</div>
<div class="a" style="left:993px;top:200px;width:41px;height:11px;background:#5a5a5a;border-radius:2px"></div>
<div class="t" style="left:993px;width:41px;text-align:center;top:202px;font-size:7.6px;color:#e4e4e4">Plane</div>
<div class="t" style="left:988px;top:234px;font-size:8.6px;color:#eee;transform:scaleX(1.046);font-weight:bold;transform-origin:0 0;">r</div>
<div class="a" style="left:980px;top:245px;width:40px;height:12px;background:#505050;"></div>
<div class="a" style="left:1025px;top:245px;width:11px;height:13px;background:#dff0dc;border:1px solid #888"></div>
<div class="a" style="left:132px;top:81px;width:593px;height:346px;background:#282828;box-shadow:0 0 6px rgba(0,0,0,0.6)"></div>
<div class="a" style="left:132px;top:81px;width:593px;height:17px;background:#ffffff;"></div>
<svg class="a" style="left:136px;top:85px;" width="10" height="10" viewBox="0 0 10 10"><circle cx="5" cy="5" r="4.6" fill="#eef020"/><g fill="#222"><circle cx="3.3" cy="3.3" r="1"/><circle cx="3.6" cy="6.8" r="1.2"/><path d="M7.5 3 A3 3 0 0 1 7.5 7" stroke="#222" stroke-width="1" fill="none"/></g></svg>
<div class="t" style="left:148px;top:85px;font-size:8.8px;color:#7c7c7c;transform:scaleX(0.804);transform-origin:0 0;">Corona 1.7 (hotfix 4) | 3000×4000px (1:8) | Camera: CoronaCamera001 | Frame 0</div>
<div class="a" style="left:651px;top:89px;width:8px;height:1px;background:#777;"></div>
<div class="a" style="left:678px;top:85px;width:9px;height:9px;background:none;border:1px solid #777"></div>
<svg class="a" style="left:706px;top:85px;" width="9" height="9" viewBox="0 0 9 9"><path d="M0.5 0.5 L8.5 8.5 M8.5 0.5 L0.5 8.5" stroke="#777" stroke-width="1"/></svg>
<div class="a" style="left:132px;top:98px;width:592px;height:15px;background:#323232;"></div>
<div class="a" style="left:132px;top:112px;width:592px;height:1px;background:#3e3e3e;"></div>
<div class="a" style="left:133px;top:99px;width:43px;height:13px;background:#3b3b3b;"></div>
<svg class="a" style="left:135px;top:99px;" width="12" height="13" viewBox="0 0 12 13"><rect x="0.5" y="0.5" width="11" height="12" fill="#134a78" stroke="#3ea8f0" stroke-width="1"/><rect x="3" y="2" width="6" height="3" fill="#8cd0ff"/><rect x="3" y="7" width="6" height="4" fill="#8cd0ff"/><rect x="5" y="8" width="2" height="2" fill="#1a6ab0"/></svg>
<div class="t" style="left:154px;top:101.5px;font-size:8.8px;color:#dedede;transform:scaleX(0.798);transform-origin:0 0;">Save</div>
<svg class="a" style="left:172px;top:108px;" width="3" height="3" viewBox="0 0 3 3"><path d="M3 0 L3 3 L0 3 Z" fill="#4aa0e8"/></svg>
<div class="a" style="left:178px;top:99px;width:44px;height:13px;background:#3b3b3b;"></div>
<svg class="a" style="left:180px;top:99px;" width="12" height="13" viewBox="0 0 12 13"><rect x="0.5" y="0.5" width="11" height="12" fill="#134a78" stroke="#3ea8f0" stroke-width="1"/><circle cx="6" cy="6.5" r="3.8" fill="none" stroke="#9cd8ff" stroke-width="1.2"/><path d="M4 6 L6 8 L9 4" stroke="#9cd8ff" fill="none"/></svg>
<div class="t" style="left:196px;top:101.5px;font-size:8.8px;color:#dedede;transform:scaleX(0.867);transform-origin:0 0;">&gt; Max</div>
<div class="a" style="left:224px;top:99px;width:44px;height:13px;background:#3b3b3b;"></div>
<svg class="a" style="left:226px;top:99px;" width="12" height="13" viewBox="0 0 12 13"><rect x="0.5" y="0.5" width="11" height="12" fill="#134a78" stroke="#3ea8f0" stroke-width="1"/><rect x="3" y="2" width="6" height="9" fill="none" stroke="#9cd8ff" stroke-width="1"/><path d="M4.5 5 H7.5 M4.5 7 H7.5" stroke="#9cd8ff"/></svg>
<div class="t" style="left:242px;top:101.5px;font-size:8.8px;color:#dedede;transform:scaleX(0.834);transform-origin:0 0;">Ctrl+C</div>
<div class="a" style="left:270px;top:99px;width:45px;height:13px;background:#3b3b3b;"></div>
<svg class="a" style="left:272px;top:99px;" width="12" height="13" viewBox="0 0 12 13"><rect x="0.5" y="0.5" width="11" height="12" fill="#134a78" stroke="#3ea8f0" stroke-width="1"/><path d="M9 6.5 A3.2 3.2 0 1 1 7 3.5" fill="none" stroke="#9cd8ff" stroke-width="1.4"/><path d="M6 1.5 L9.5 3.5 L6.5 6Z" fill="#9cd8ff"/></svg>
<div class="t" style="left:287px;top:101.5px;font-size:8.8px;color:#dedede;transform:scaleX(0.779);transform-origin:0 0;">Refresh</div>
<div class="a" style="left:317px;top:99px;width:44px;height:13px;background:#3b3b3b;"></div>
<svg class="a" style="left:319px;top:99px;" width="12" height="13" viewBox="0 0 12 13"><rect x="0.5" y="0.5" width="11" height="12" fill="#134a78" stroke="#3ea8f0" stroke-width="1"/><path d="M2.5 3 L9.5 10 M9.5 3 L2.5 10" stroke="#bfe6ff" stroke-width="1.8"/></svg>
<div class="t" style="left:336px;top:101.5px;font-size:8.8px;color:#dedede;transform:scaleX(0.826);transform-origin:0 0;">Erase</div>
<div class="a" style="left:363px;top:99px;width:41px;height:13px;background:#3b3b3b;"></div>
<svg class="a" style="left:365px;top:99px;" width="12" height="13" viewBox="0 0 12 13"><rect x="0.5" y="0.5" width="11" height="12" fill="#1a6ab0" stroke="#3aa0f0"/><circle cx="6" cy="6.5" r="3.5" fill="none" stroke="#9cd8ff" stroke-width="1.8" stroke-dasharray="1.4 1"/><circle cx="6" cy="6.5" r="1.5" fill="#9cd8ff"/></svg>
<div class="t" style="left:381px;top:101.5px;font-size:8.8px;color:#dedede;transform:scaleX(0.925);transform-origin:0 0;">Tools</div>
<div class="a" style="left:406px;top:99px;width:45px;height:13px;background:#3b3b3b;"></div>
<svg class="a" style="left:408px;top:99px;" width="12" height="13" viewBox="0 0 12 13"><rect x="1.5" y="1.5" width="10" height="10" fill="none" stroke="#3aa0f0" stroke-width="1.3" stroke-dasharray="2 1.2"/></svg>
<div class="t" style="left:424px;top:101.5px;font-size:8.8px;color:#dedede;transform:scaleX(0.825);transform-origin:0 0;">Region</div>
<svg class="a" style="left:447px;top:108px;" width="3" height="3" viewBox="0 0 3 3"><path d="M3 0 L3 3 L0 3 Z" fill="#4aa0e8"/></svg>
<div class="a" style="left:453px;top:99px;width:122px;height:13px;background:#3b3b3b;"></div>
<div class="t" style="left:457px;top:102px;font-size:8.6px;color:#e6e6e6;font-style:italic;font-weight:bold;transform:scaleX(0.9);transform-origin:0 0">BEAUTY</div>
<div class="a" style="left:565px;top:99px;width:10px;height:13px;background:#2e2e2e;"></div>
<svg class="a" style="left:567px;top:104px;" width="6" height="4" viewBox="0 0 6 4"><path d="M0 0 L6 0 L3 4Z" fill="#eee"/></svg>
<div class="a" style="left:579px;top:99px;width:12px;height:13px;background:#2a9ae6;"></div>
<svg class="a" style="left:579px;top:99px;" width="12" height="13" viewBox="0 0 12 13"><circle cx="5.5" cy="5.5" r="3.6" fill="none" stroke="#111" stroke-width="1.2"/><path d="M8 8 L11 11.5" stroke="#111" stroke-width="1.6"/><path d="M3.5 5.5 H7.5 M5.5 3.5 V7.5" stroke="#111" stroke-width="1.1"/></svg>
<div class="a" style="left:594px;top:99px;width:12px;height:13px;background:#2a9ae6;"></div>
<svg class="a" style="left:594px;top:99px;" width="12" height="13" viewBox="0 0 12 13"><circle cx="5.5" cy="5.5" r="3.6" fill="none" stroke="#111" stroke-width="1.2"/><path d="M8 8 L11 11.5" stroke="#111" stroke-width="1.6"/><path d="M3.5 5.5 H7.5" stroke="#111" stroke-width="1.1"/></svg>
<div class="a" style="left:610px;top:99px;width:12px;height:13px;background:#2a9ae6;"></div>
<svg class="a" style="left:610px;top:99px;" width="12" height="13" viewBox="0 0 12 13"><circle cx="5.5" cy="5.5" r="3.6" fill="none" stroke="#111" stroke-width="1.2"/><path d="M8 8 L11 11.5" stroke="#111" stroke-width="1.6"/><path d="M4 4 L7 7 M7 4 L4 7" stroke="#111" stroke-width="1"/></svg>
<div class="a" style="left:632px;top:99px;width:46px;height:13px;background:#3b3b3b;"></div>
<div class="a" style="left:636px;top:101px;width:10px;height:10px;background:#1d8ad8;"></div>
<div class="t" style="left:654px;top:101.5px;font-size:8.8px;color:#e0e0e0;transform:scaleX(0.939);transform-origin:0 0;">Stop</div>
<svg class="a" style="left:674px;top:108px;" width="3" height="3" viewBox="0 0 3 3"><path d="M3 0 L3 3 L0 3 Z" fill="#4aa0e8"/></svg>
<div class="a" style="left:680px;top:99px;width:42px;height:13px;background:#363636;"></div>
<svg class="a" style="left:684px;top:101px;" width="9" height="10" viewBox="0 0 9 10"><path d="M0.5 0.5 L8.5 5 L0.5 9.5Z" fill="#6a6a6a"/></svg>
<div class="t" style="left:697px;top:101.5px;font-size:8.8px;color:#5e5e5e;transform:scaleX(0.797);transform-origin:0 0;">Render</div>
<svg class="a" style="left:241px;top:114px;overflow:hidden" width="232" height="313" viewBox="0 0 232 313"><defs><filter id="nz" x="0" y="0" width="100%" height="100%"><feTurbulence type="fractalNoise" baseFrequency="0.87" numOctaves="2" seed="4"/><feColorMatrix type="matrix" values="0.33 0.33 0.33 0 0  0.33 0.33 0.33 0 0  0.33 0.33 0.33 0 0  0 0 0 0 1"/></filter>
<filter id="th" x="0" y="0" width="100%" height="100%"><feColorMatrix type="matrix" values="0 0 0 0 0.62  0 0 0 0 0.62  0 0 0 0 0.62  7 0 0 0 -3.72"/></filter>
<filter id="bb" x="-20%" y="-20%" width="140%" height="140%"><feGaussianBlur stdDeviation="7"/></filter></defs>
<rect width="232" height="313" fill="#050505"/>
<g filter="url(#th)"><rect width="232" height="313" filter="url(#nz)"/>
<g filter="url(#bb)">
<rect x="-10" y="-10" width="190" height="36" fill="#fff" opacity="0.04"/>
<rect x="-10" y="28" width="90" height="26" fill="#000" opacity="0.06"/>
<rect x="28" y="52" width="52" height="44" fill="#fff" opacity="0.05"/>
<path d="M75 -10 L140 -10 L245 60 L245 105 L200 95 L120 40 Z" fill="#fff" opacity="0.06"/>
<path d="M130 60 L200 100 L180 105 L120 80 Z" fill="#000" opacity="0.03"/>
<rect x="-10" y="100" width="260" height="230" fill="#000" opacity="0.04"/>
<rect x="17" y="60" width="4" height="250" fill="#000" opacity="0.06"/>
<rect x="94" y="90" width="4" height="220" fill="#000" opacity="0.06"/>
</g></g></svg>
<div class="a" style="left:582px;top:113px;width:143px;height:314px;background:#3c3c3c;"></div>
<div class="a" style="left:582px;top:113px;width:1px;height:314px;background:#2a2a2a;"></div>
<div class="a" style="left:584px;top:115px;width:22px;height:12px;background:#444;"></div>
<div class="t" style="left:589px;top:117.5px;font-size:8.8px;color:#dcdcdc;transform:scaleX(0.795);transform-origin:0 0;">Post</div>
<div class="a" style="left:607px;top:115px;width:27px;height:12px;background:#3a3d40;border:1px solid #2e4d6a"></div>
<div class="t" style="left:613px;top:117.5px;font-size:8.8px;color:#dcdcdc;transform:scaleX(0.798);transform-origin:0 0;">Stats</div>
<div class="a" style="left:635px;top:115px;width:30px;height:12px;background:#444;"></div>
<div class="t" style="left:638px;top:117.5px;font-size:8.8px;color:#dcdcdc;transform:scaleX(0.877);transform-origin:0 0;">History</div>
<div class="a" style="left:667px;top:115px;width:17px;height:12px;background:#444;"></div>
<div class="t" style="left:672px;top:117.5px;font-size:8.8px;color:#dcdcdc;transform:scaleX(0.747);transform-origin:0 0;">DR</div>
<div class="a" style="left:686px;top:115px;width:36px;height:12px;background:#444;"></div>
<div class="t" style="left:691px;top:117.5px;font-size:8.8px;color:#dcdcdc;transform:scaleX(0.885);transform-origin:0 0;">LightMix</div>
<div class="t" style="left:588px;top:133.5px;font-size:8.6px;color:#e8e8e8;transform:scaleX(0.989);font-weight:bold;transform-origin:0 0;">TIMES</div>
<div class="a" style="left:588px;top:144px;width:130px;height:1px;background:#6a6a6a;"></div>
<div class="t" style="left:588px;top:145.0px;font-size:8.8px;color:#dadada;transform:scaleX(0.850);transform-origin:0 0;">Scene parsing:</div>
<div class="t" style="left:694.0416184375px;top:145.0px;font-size:8.8px;color:#dadada;transform:scaleX(0.816);transform-origin:0 0;">0:00:37</div>
<div class="t" style="left:588px;top:154.9px;font-size:8.8px;color:#dadada;transform:scaleX(0.850);transform-origin:0 0;">Geometry:</div>
<div class="t" style="left:694.0416184375px;top:154.9px;font-size:8.8px;color:#dadada;transform:scaleX(0.816);transform-origin:0 0;">0:00:09</div>
<div class="t" style="left:588px;top:164.8px;font-size:8.8px;color:#dadada;transform:scaleX(0.850);transform-origin:0 0;">UHD cache precomp:</div>
<div class="t" style="left:694.0416184375px;top:164.8px;font-size:8.8px;color:#dadada;transform:scaleX(0.816);transform-origin:0 0;">0:00:48</div>
<div class="t" style="left:588px;top:174.7px;font-size:8.8px;color:#dadada;transform:scaleX(0.850);transform-origin:0 0;">Rendering:</div>
<div class="t" style="left:694.0416184375px;top:174.7px;font-size:8.8px;color:#dadada;transform:scaleX(0.816);transform-origin:0 0;">0:01:29</div>
<div class="t" style="left:588px;top:184.6px;font-size:8.8px;color:#dadada;transform:scaleX(0.850);transform-origin:0 0;">Denoising:</div>
<div class="t" style="left:694.0416184375px;top:184.6px;font-size:8.8px;color:#dadada;transform:scaleX(0.816);transform-origin:0 0;">0:00:00</div>
<div class="t" style="left:588px;top:194.5px;font-size:8.8px;color:#dadada;transform:scaleX(0.850);transform-origin:0 0;">Estimated remaining:</div>
<div class="t" style="left:706.1377601875px;top:194.5px;font-size:8.8px;color:#dadada;transform:scaleX(0.867);transform-origin:0 0;">- - -</div>
<div class="t" style="left:588px;top:204.4px;font-size:8.8px;color:#dadada;transform:scaleX(0.850);transform-origin:0 0;">TOTAL elapsed:</div>
<div class="t" style="left:694.0416184375px;top:204.4px;font-size:8.8px;color:#dadada;transform:scaleX(0.816);transform-origin:0 0;">0:03:04</div>
<div class="t" style="left:588px;top:217px;font-size:8.6px;color:#e8e8e8;transform:scaleX(0.911);font-weight:bold;transform-origin:0 0;">SCENE</div>
<div class="a" style="left:588px;top:227px;width:130px;height:1px;background:#6a6a6a;"></div>
<div class="t" style="left:588px;top:228.0px;font-size:8.8px;color:#dadada;transform:scaleX(0.850);transform-origin:0 0;">Primitives uniq.:</div>
<div class="t" style="left:686.1539444125px;top:228.0px;font-size:8.8px;color:#dadada;transform:scaleX(0.813);transform-origin:0 0;">9 562 943</div>
<div class="t" style="left:588px;top:237.9px;font-size:8.8px;color:#dadada;transform:scaleX(0.850);transform-origin:0 0;">Primitives inst.:</div>
<div class="t" style="left:691.6296410125px;top:237.9px;font-size:8.8px;color:#dadada;transform:scaleX(0.829);transform-origin:0 0;">2 268 M</div>
<div class="t" style="left:588px;top:247.8px;font-size:8.8px;color:#dadada;transform:scaleX(0.850);transform-origin:0 0;">Geometry groups:</div>
<div class="t" style="left:706.1684889625px;top:247.8px;font-size:8.8px;color:#dadada;transform:scaleX(0.806);transform-origin:0 0;">109</div>
<div class="t" style="left:588px;top:257.7px;font-size:8.8px;color:#dadada;transform:scaleX(0.850);transform-origin:0 0;">Instances:</div>
<div class="t" style="left:686.1539444125px;top:257.7px;font-size:8.8px;color:#dadada;transform:scaleX(0.813);transform-origin:0 0;">1 057 707</div>
<div class="t" style="left:588px;top:267.6px;font-size:8.8px;color:#dadada;transform:scaleX(0.850);transform-origin:0 0;">Lights (groups):</div>
<div class="t" style="left:702.91069885px;top:267.6px;font-size:8.8px;color:#dadada;transform:scaleX(0.834);transform-origin:0 0;">9 (9)</div>
<div class="t" style="left:588px;top:280px;font-size:8.6px;color:#e8e8e8;transform:scaleX(0.795);font-weight:bold;transform-origin:0 0;">UHD CACHE</div>
<div class="a" style="left:760px;top:125px;width:230px;height:148px;background:#3d3d3d;box-shadow:0 0 5px rgba(0,0,0,0.55)"></div>
<div class="a" style="left:760px;top:125px;width:230px;height:16px;background:#fff;"></div>
<svg class="a" style="left:764px;top:128px;" width="9" height="10" viewBox="0 0 9 10"><rect x="0" y="0.5" width="9" height="9" rx="1" fill="#e0f2f2"/><text x="1.5" y="8.5" font-family="Liberation Sans" font-weight="bold" font-size="9" fill="#1a7a80">3</text></svg>
<div class="t" style="left:776px;top:129px;font-size:8.8px;color:#808080;transform:scaleX(0.813);transform-origin:0 0;">Rendering</div>
<svg class="a" style="left:979px;top:129px;" width="8" height="8" viewBox="0 0 8 8"><path d="M0.5 0.5 L7.5 7.5 M7.5 0.5 L0.5 7.5" stroke="#666" stroke-width="1"/></svg>
<div class="t" style="left:765px;top:152px;font-size:8.6px;color:#e8e8e8;transform:scaleX(0.791);transform-origin:0 0;-webkit-text-stroke:0.15px #e8e8e8">Total Animation:</div>
<div class="a" style="left:906px;top:146px;width:33px;height:12px;background:#555;border-radius:1px"></div>
<div class="t" style="left:906px;width:33px;text-align:center;top:148.5px;font-size:8px;color:#ddd">Stop</div>
<div class="a" style="left:948px;top:146px;width:33px;height:12px;background:#555;border-radius:1px"></div>
<div class="t" style="left:948px;width:33px;text-align:center;top:148.5px;font-size:8px;color:#ddd">Cancel</div>
<div class="a" style="left:765px;top:163px;width:221px;height:9px;background:#e8e8e8;border:1px solid #bbb"></div>
<div class="t" style="left:765px;top:177px;font-size:8.4px;color:#e0e0e0;transform:scaleX(0.823);transform-origin:0 0;">Current Task:</div>
<div class="t" style="left:813px;top:177px;font-size:8.4px;color:#e8e8e8;transform:scaleX(0.785);transform-origin:0 0;">Rendering initial pass (elapsed: 0:03:04)</div>
<div class="a" style="left:765px;top:187px;width:221px;height:10px;background:#e8e8e8;border:1px solid #bbb"></div>
<div class="a" style="left:766px;top:188px;width:43px;height:8px;background:#1fb030;"></div>
<div class="a" style="left:766px;top:206px;width:217px;height:54px;background:#454545;"></div>
<svg class="a" style="left:769px;top:211px;" width="5" height="4" viewBox="0 0 5 4"><path d="M0 0 L5 0 L2.5 4Z" fill="#ccc"/></svg>
<div class="t" style="left:778px;top:210px;font-size:8.4px;color:#eeeeee;transform:scaleX(0.864);font-weight:bold;transform-origin:0 0;">Common Parameters</div>
<div class="a" style="left:973px;top:210px;width:4px;height:4px;background:#555;"></div>
<div class="t" style="left:778px;top:221px;font-size:8.2px;color:#e0e0e0;transform:scaleX(0.811);transform-origin:0 0;">Rendering Progress:</div>
<div class="a" style="left:776px;top:227px;width:196px;height:35px;background:none;border:1px solid #555;border-bottom:none"></div>
<div class="t" style="left:779px;top:232px;font-size:8.2px;color:#ddd;transform:scaleX(0.786);transform-origin:0 0;">Frame #</div>
<div class="t" style="left:808px;top:230px;font-size:8.2px;color:#ddd;transform:scaleX(1.009);transform-origin:0 0;">0</div>
<div class="t" style="left:796px;top:243px;font-size:8.2px;color:#ddd;transform:scaleX(0.877);transform-origin:0 0;">1of 1</div>
<div class="t" style="left:839px;top:242px;font-size:8.2px;color:#ddd;transform:scaleX(0.924);transform-origin:0 0;">Total</div>
<div class="t" style="left:779px;top:253px;font-size:8.2px;color:#ddd;transform:scaleX(0.838);transform-origin:0 0;">Pass #</div>
<div class="t" style="left:804px;top:253px;font-size:8.2px;color:#ddd;transform:scaleX(0.877);transform-origin:0 0;">1/1</div>
<div class="t" style="left:883px;top:231px;font-size:8.2px;color:#ddd;transform:scaleX(0.799);transform-origin:0 0;">Last Frame Time:</div>
<div class="t" style="left:938px;top:231px;font-size:8.2px;color:#ddd;transform:scaleX(0.877);transform-origin:0 0;">0:00:00</div>
<div class="t" style="left:893px;top:243px;font-size:8.2px;color:#ddd;transform:scaleX(0.789);transform-origin:0 0;">Elapsed Time:</div>
<div class="t" style="left:938px;top:243px;font-size:8.2px;color:#ddd;transform:scaleX(0.877);transform-origin:0 0;">0:00:00</div>
<div class="t" style="left:886px;top:253px;font-size:8.2px;color:#ddd;transform:scaleX(0.778);transform-origin:0 0;">Time Remaining:</div>
<div class="t" style="left:936px;top:253px;font-size:8.2px;color:#ddd;transform:scaleX(0.721);transform-origin:0 0;">??:??:??</div>
<div class="a" style="left:982px;top:208px;width:2px;height:20px;background:#5a5a5a;"></div>
<div class="a" style="left:760px;top:260px;width:230px;height:13px;background:#3d3d3d;"></div>
<div class="a" style="left:760px;top:260px;width:230px;height:1px;background:#353535;"></div>
<div class="a" style="left:78px;top:312px;width:396px;height:243px;background:#3e3e3e;box-shadow:0 0 6px rgba(0,0,0,0.6)"></div>
<div class="a" style="left:78px;top:312px;width:396px;height:16px;background:#fff;"></div>
<svg class="a" style="left:81px;top:314px;" width="11" height="11" viewBox="0 0 11 11"><rect x="0" y="0" width="11" height="11" rx="2" fill="#c03a20"/><circle cx="5.5" cy="5.5" r="3.6" fill="#1a1a1a"/><circle cx="5.5" cy="5.5" r="2.6" fill="#d04a2a"/></svg>
<div class="t" style="left:94px;top:315px;font-size:8.8px;color:#858585;transform:scaleX(0.819);transform-origin:0 0;">Corona Error Message(s)&nbsp;&nbsp;&nbsp; [Corona 1.7 (hotfix 4)]</div>
<div class="a" style="left:400px;top:319px;width:8px;height:1px;background:#777;"></div>
<div class="a" style="left:428px;top:315px;width:8px;height:8px;background:none;border:1px solid #777"></div>
<svg class="a" style="left:456px;top:315px;" width="8" height="8" viewBox="0 0 8 8"><path d="M0.5 0.5 L7.5 7.5 M7.5 0.5 L0.5 7.5" stroke="#777" stroke-width="1"/></svg>
<div class="a" style="left:78px;top:328px;width:396px;height:15px;background:#333;"></div>
<div class="a" style="left:80px;top:329px;width:80px;height:13px;background:#3a3a3a;"></div>
<div class="a" style="left:162px;top:329px;width:53px;height:13px;background:#3a3a3a;"></div>
<svg class="a" style="left:81px;top:329px;" width="12" height="13" viewBox="0 0 12 13"><rect x="0.5" y="0.5" width="11" height="12" fill="#1a6ab0" stroke="#3aa0f0"/><rect x="3" y="2.5" width="6" height="8" fill="none" stroke="#8cd0ff" stroke-width="1"/></svg>
<div class="t" style="left:96px;top:332px;font-size:8.6px;color:#e2e2e2;transform:scaleX(0.874);transform-origin:0 0;">Copy to clipboard</div>
<svg class="a" style="left:163px;top:329px;" width="12" height="13" viewBox="0 0 12 13"><rect x="0.5" y="0.5" width="11" height="12" fill="#1a6ab0" stroke="#3aa0f0"/><path d="M2.5 3 L9.5 10 M9.5 3 L2.5 10" stroke="#bfe6ff" stroke-width="1.8"/></svg>
<div class="t" style="left:180px;top:332px;font-size:8.6px;color:#e2e2e2;transform:scaleX(0.828);transform-origin:0 0;">Clear log</div>
<div class="t" style="left:355px;top:332px;font-size:8.6px;color:#d8d8d8;transform:scaleX(0.837);transform-origin:0 0;">Show:</div>
<div class="a" style="left:381px;top:328px;width:92px;height:15px;background:#2e2e2e;border:1px solid #4a6a8a"></div>
<div class="t" style="left:386px;top:332px;font-size:8.6px;color:#dedede;transform:scaleX(0.832);transform-origin:0 0;">Errors and warnings</div>
<div class="a" style="left:463px;top:329px;width:10px;height:13px;background:#555;"></div>
<svg class="a" style="left:465px;top:334px;" width="6" height="4" viewBox="0 0 6 4"><path d="M0 0 L6 0 L3 4Z" fill="#eee"/></svg>
<svg class="a" style="left:81px;top:347px;" width="13" height="13" viewBox="0 0 13 13"><circle cx="6.2" cy="6.2" r="5.9" fill="#f2e020" stroke="#222" stroke-width="0.6"/><rect x="5.1" y="2.5" width="2.2" height="5.2" fill="#222"/><circle cx="6.2" cy="9.4" r="1.1" fill="#222"/></svg>
<div class="t" style="left:101px;top:348.4px;font-size:8.1px;color:#dcdcdc;transform:scaleX(0.859);transform-origin:0 0;">System is running low on RAM. You may experience excessive parsing times</div>
<div class="t" style="left:101px;top:356.4px;font-size:8.1px;color:#dcdcdc;transform:scaleX(0.879);transform-origin:0 0;">and/or crashes. You will probably have to simplify the scene.</div>
<div class="t" style="left:101px;top:372.4px;font-size:8.1px;color:#dcdcdc;transform:scaleX(0.867);transform-origin:0 0;">13,9 GiB of virtualized* RAM used by Corona + 3ds Max</div>
<div class="t" style="left:101px;top:380.4px;font-size:8.1px;color:#dcdcdc;transform:scaleX(0.881);transform-origin:0 0;">31,9 GiB of virtualized* RAM used by all running applications</div>
<div class="t" style="left:101px;top:388.4px;font-size:8.1px;color:#dcdcdc;transform:scaleX(0.857);transform-origin:0 0;">15,8 GiB of physical RAM installed on system</div>
<div class="t" style="left:101px;top:396.4px;font-size:8.1px;color:#dcdcdc;transform:scaleX(0.868);transform-origin:0 0;">54,9 GiB of virtualized* RAM provided by OS</div>
<div class="t" style="left:101px;top:412.4px;font-size:8.1px;color:#dcdcdc;transform:scaleX(0.861);transform-origin:0 0;">* virtualized RAM means physical RAM + swap file on HDD/SSD</div>
<div class="t" style="left:101px;top:428.4px;font-size:8.1px;color:#dcdcdc;transform:scaleX(0.876);transform-origin:0 0;">Corona RAM usage breakdown:</div>
<div class="t" style="left:101px;top:436.4px;font-size:8.1px;color:#dcdcdc;transform:scaleX(0.849);transform-origin:0 0;">1,1 GiB used by render elements</div>
<div class="t" style="left:106px;top:445px;font-size:8.1px;color:#3a9ae8;transform:scaleX(0.851);transform-origin:0 0;text-decoration:underline">Learn more »</div>
<div class="t" style="left:366px;top:349px;font-size:8.1px;color:#e4e4e4;transform:scaleX(0.741);transform-origin:0 0;">Dismiss</div>
<div class="t" style="left:396px;top:349px;font-size:8.1px;color:#e4e4e4;transform:scaleX(0.803);transform-origin:0 0;">Ignore similar messages</div>
<div class="a" style="left:78px;top:537px;width:396px;height:1px;background:#2a2a2a;"></div>
<div class="a" style="left:78px;top:538px;width:396px;height:1px;background:#4a4a4a;"></div>
<div class="t" style="left:180px;top:543px;font-size:8.6px;color:#eeeeee;transform:scaleX(0.786);transform-origin:0 0;">If you need help, please visit our</div>
<div class="t" style="left:285px;top:543px;font-size:8.6px;color:#eeeeee;transform:scaleX(0.766);transform-origin:0 0;">Corona Renderer Helpdesk.</div>
<div class="a" style="left:533px;top:291px;width:584px;height:276px;background:#fff;box-shadow:0 0 8px rgba(0,0,0,0.5)"></div>
<svg class="a" style="left:538px;top:296px;" width="11" height="10" viewBox="0 0 11 10"><rect x="0.5" y="0.5" width="10" height="8" fill="#cfe6f0" stroke="#6a9ab0" stroke-width="0.8"/><path d="M1.5 6 L4 3.5 L6 5.5 L9.5 2" stroke="#2a8a60" fill="none" stroke-width="0.9"/><rect x="3" y="9" width="5" height="1" fill="#777"/></svg>
<div class="t" style="left:551px;top:297px;font-size:8.8px;color:#999;transform:scaleX(0.741);transform-origin:0 0;">Диспетчер задач</div>
<div class="a" style="left:1043px;top:300px;width:8px;height:1px;background:#666;"></div>
<div class="a" style="left:1070px;top:296px;width:9px;height:9px;background:none;border:1px solid #666"></div>
<svg class="a" style="left:1098px;top:296px;" width="9" height="9" viewBox="0 0 9 9"><path d="M0.5 0.5 L8.5 8.5 M8.5 0.5 L0.5 8.5" stroke="#666" stroke-width="1"/></svg>
<div class="t" style="left:538px;top:312px;font-size:8.6px;color:#555;transform:scaleX(0.804);transform-origin:0 0;">Файл</div>
<div class="t" style="left:564px;top:312px;font-size:8.6px;color:#555;transform:scaleX(0.829);transform-origin:0 0;">Параметры</div>
<div class="t" style="left:611px;top:312px;font-size:8.6px;color:#555;transform:scaleX(0.803);transform-origin:0 0;">Вид</div>
<div class="a" style="left:533px;top:321px;width:584px;height:1px;background:#e6e6e6;"></div>
<div class="a" style="left:533px;top:337px;width:584px;height:1px;background:#d9d9d9;"></div>
<div class="a" style="left:535px;top:323px;width:43px;height:15px;background:#fff;border:1px solid #d9d9d9;border-bottom:none"></div>
<div class="t" style="left:538px;top:326px;font-size:9px;color:#000;transform:scaleX(0.845);transform-origin:0 0;-webkit-text-stroke:0.2px #000">Процессы</div>
<div class="a" style="left:579px;top:324px;width:75px;height:13px;background:#f0f0f0;border:1px solid #e0e0e0"></div>
<div class="t" style="left:580.5px;top:326.5px;font-size:9px;color:#000;transform:scaleX(0.818);transform-origin:0 0;-webkit-text-stroke:0.15px #000">Производительность</div>
<div class="a" style="left:656px;top:324px;width:80px;height:13px;background:#f0f0f0;border:1px solid #e0e0e0"></div>
<div class="t" style="left:659px;top:326.5px;font-size:9px;color:#000;transform:scaleX(0.843);transform-origin:0 0;-webkit-text-stroke:0.15px #000">Журнал приложений</div>
<div class="a" style="left:738px;top:324px;width:49px;height:13px;background:#f0f0f0;border:1px solid #e0e0e0"></div>
<div class="t" style="left:741px;top:326.5px;font-size:9px;color:#000;transform:scaleX(0.788);transform-origin:0 0;-webkit-text-stroke:0.15px #000">Автозагрузка</div>
<div class="a" style="left:789px;top:324px;width:53px;height:13px;background:#f0f0f0;border:1px solid #e0e0e0"></div>
<div class="t" style="left:791.7px;top:326.5px;font-size:9px;color:#000;transform:scaleX(0.800);transform-origin:0 0;-webkit-text-stroke:0.15px #000">Пользователи</div>
<div class="a" style="left:844px;top:324px;width:52px;height:13px;background:#f0f0f0;border:1px solid #e0e0e0"></div>
<div class="t" style="left:847px;top:326.5px;font-size:9px;color:#000;transform:scaleX(0.832);transform-origin:0 0;-webkit-text-stroke:0.15px #000">Подробности</div>
<div class="a" style="left:898px;top:324px;width:34px;height:13px;background:#f0f0f0;border:1px solid #e0e0e0"></div>
<div class="t" style="left:900.7px;top:326.5px;font-size:9px;color:#000;transform:scaleX(0.821);transform-origin:0 0;-webkit-text-stroke:0.15px #000">Службы</div>
<div class="a" style="left:752px;top:345px;width:45px;height:27px;background:#f9c4ac;"></div>
<div class="a" style="left:752px;top:345px;width:45px;height:27px;background:linear-gradient(#f7b49a,#fbd6c4)"></div>
<div class="a" style="left:677px;top:348px;width:1px;height:24px;background:#e6e6e6;"></div>
<div class="a" style="left:842px;top:348px;width:1px;height:24px;background:#e8e8e8;"></div>
<div class="a" style="left:887px;top:348px;width:1px;height:24px;background:#e8e8e8;"></div>
<div class="a" style="left:932px;top:348px;width:1px;height:24px;background:#e8e8e8;"></div>
<div class="a" style="left:977px;top:348px;width:1px;height:24px;background:#e8e8e8;"></div>
<div class="a" style="left:1022px;top:348px;width:1px;height:24px;background:#e8e8e8;"></div>
<div class="a" style="left:1073px;top:348px;width:1px;height:24px;background:#e8e8e8;"></div>
<div class="a" style="left:533px;top:371px;width:584px;height:1px;background:#d6d6d6;"></div>
<div class="t" style="left:538px;top:361px;font-size:8.4px;color:#5a5a5a;transform:scaleX(0.764);transform-origin:0 0;">Имя</div>
<div class="t" style="left:682px;top:361px;font-size:8.4px;color:#5a5a5a;transform:scaleX(0.859);transform-origin:0 0;">Состояние</div>
<div class="t" style="left:761px;top:348.5px;font-size:10.2px;color:#222;transform:scaleX(1.188);transform-origin:0 0;">100%</div>
<div class="t" style="left:780px;top:361.5px;font-size:8.4px;color:#333;transform:scaleX(0.979);transform-origin:0 0;">ЦП</div>
<div class="t" style="left:817px;top:348.5px;font-size:10.2px;color:#222;transform:scaleX(0.980);transform-origin:0 0;">92%</div>
<div class="t" style="left:813px;top:361.5px;font-size:8.4px;color:#6a6a6a;transform:scaleX(0.820);transform-origin:0 0;">Память</div>
<div class="t" style="left:869px;top:348.5px;font-size:10.2px;color:#222;transform:scaleX(0.882);transform-origin:0 0;">4%</div>
<div class="t" style="left:867px;top:361.5px;font-size:8.4px;color:#6a6a6a;transform:scaleX(0.822);transform-origin:0 0;">Диск</div>
<div class="t" style="left:914px;top:348.5px;font-size:10.2px;color:#222;transform:scaleX(0.882);transform-origin:0 0;">0%</div>
<div class="t" style="left:912px;top:361.5px;font-size:8.4px;color:#6a6a6a;transform:scaleX(0.803);transform-origin:0 0;">Сеть</div>
<div class="t" style="left:952px;top:348.5px;font-size:10.2px;color:#222;transform:scaleX(0.980);transform-origin:0 0;">26%</div>
<div class="t" style="left:958px;top:361.5px;font-size:8.4px;color:#6a6a6a;transform:scaleX(0.769);transform-origin:0 0;">GPU</div>
<svg class="a" style="left:802px;top:351px;" width="6" height="4" viewBox="0 0 6 4"><path d="M0.5 0.5 L3 3 L5.5 0.5" stroke="#666" fill="none" stroke-width="0.9"/></svg>
<div class="t" style="left:981px;top:361px;font-size:8.4px;color:#6a6a6a;transform:scaleX(0.808);transform-origin:0 0;">Ядро GPU</div>
<div class="t" style="left:1026px;top:361px;font-size:8.4px;color:#6a6a6a;transform:scaleX(0.903);transform-origin:0 0;">Энергопот...</div>
<div class="t" style="left:1077px;top:361px;font-size:8.4px;color:#6a6a6a;transform:scaleX(0.900);transform-origin:0 0;">Тенденция</div>
<div class="a" style="left:533px;top:372.0px;width:573px;height:17.25px;background:#dadada;"></div>
<div class="a" style="left:752px;top:372.0px;width:45px;height:17.25px;background:#dccaa4;"></div>
<div class="a" style="left:797px;top:372.0px;width:45px;height:17.25px;background:#d8ccac;"></div>
<div class="a" style="left:842px;top:372.0px;width:45px;height:17.25px;background:#dcd8cc;"></div>
<div class="a" style="left:887px;top:372.0px;width:45px;height:17.25px;background:#dadada;"></div>
<div class="a" style="left:932px;top:372.0px;width:45px;height:17.25px;background:#dadada;"></div>
<div class="a" style="left:977px;top:372.0px;width:45px;height:17.25px;background:#dadada;"></div>
<div class="a" style="left:1022px;top:372.0px;width:51px;height:17.25px;background:#e8c0b0;"></div>
<div class="a" style="left:1073px;top:372.0px;width:33px;height:17.25px;background:#e8c0b0;"></div>
<svg class="a" style="left:539px;top:377.5px;" width="5" height="8" viewBox="0 0 5 8"><path d="M1 0.5 L4 3.8 L1 7" stroke="#555" fill="none" stroke-width="0.9"/></svg>
<svg class="a" style="left:551px;top:375.0px;" width="11" height="11" viewBox="0 0 11 11"><rect x="0.5" y="1.5" width="10" height="8" rx="1" fill="#fff" stroke="#1e4f7a" stroke-width="1.1"/><rect x="0.5" y="1.5" width="10" height="1.5" fill="#1e4f7a"/></svg>
<div class="t" style="left:564px;top:377.3px;font-size:8.8px;color:#000;transform:scaleX(0.816);transform-origin:0 0;-webkit-text-stroke:0.15px #000">3dsmax.exe (4)</div>
<div class="t" style="left:772.7358253125px;top:377.3px;font-size:8.8px;color:#000;transform:scaleX(0.772);transform-origin:0 0;-webkit-text-stroke:0.2px #000">92,9%</div>
<div class="t" style="left:801.271004375px;top:377.3px;font-size:8.8px;color:#000;transform:scaleX(0.796);transform-origin:0 0;-webkit-text-stroke:0.2px #000">8 881,8 МБ</div>
<div class="t" style="left:853.95189953125px;top:377.3px;font-size:8.8px;color:#000;transform:scaleX(0.810);transform-origin:0 0;-webkit-text-stroke:0.2px #000">3,6 МБ/с</div>
<div class="t" style="left:897.7968456250001px;top:377.3px;font-size:8.8px;color:#000;transform:scaleX(0.823);transform-origin:0 0;-webkit-text-stroke:0.2px #000">0 Мбит/с</div>
<div class="t" style="left:962.180546875px;top:377.3px;font-size:8.8px;color:#000;transform:scaleX(0.772);transform-origin:0 0;-webkit-text-stroke:0.2px #000">0%</div>
<div class="t" style="left:1026px;top:377.3px;font-size:8.8px;color:#000;transform:scaleX(0.840);transform-origin:0 0;-webkit-text-stroke:0.15px #000">Очень выс...</div>
<div class="t" style="left:1077px;top:377.3px;font-size:8.8px;color:#000;transform:scaleX(0.821);transform-origin:0 0;-webkit-text-stroke:0.15px #000">Очень вы</div>
<div class="a" style="left:752px;top:389.25px;width:45px;height:17.25px;background:#fff4c8;"></div>
<div class="a" style="left:797px;top:389.25px;width:45px;height:17.25px;background:#fce8a0;"></div>
<div class="a" style="left:842px;top:389.25px;width:45px;height:17.25px;background:#fff4d0;"></div>
<div class="a" style="left:887px;top:389.25px;width:45px;height:17.25px;background:#fff4d0;"></div>
<div class="a" style="left:932px;top:389.25px;width:45px;height:17.25px;background:#fff4d0;"></div>
<div class="a" style="left:977px;top:389.25px;width:45px;height:17.25px;background:#ffffff;"></div>
<div class="a" style="left:1022px;top:389.25px;width:51px;height:17.25px;background:#fff4d0;"></div>
<div class="a" style="left:1073px;top:389.25px;width:33px;height:17.25px;background:#fff4d0;"></div>
<svg class="a" style="left:539px;top:394.75px;" width="5" height="8" viewBox="0 0 5 8"><path d="M1 0.5 L4 3.8 L1 7" stroke="#555" fill="none" stroke-width="0.9"/></svg>
<svg class="a" style="left:551px;top:392.25px;" width="11" height="11" viewBox="0 0 11 11"><rect x="0.5" y="1.5" width="10" height="8" rx="1" fill="#fff" stroke="#1e4f7a" stroke-width="1.1"/><rect x="0.5" y="1.5" width="10" height="1.5" fill="#1e4f7a"/></svg>
<div class="t" style="left:564px;top:394.55px;font-size:8.8px;color:#000;transform:scaleX(0.816);transform-origin:0 0;-webkit-text-stroke:0.15px #000">3dsmax.exe (6)</div>
<div class="t" style="left:776.51445703125px;top:394.55px;font-size:8.8px;color:#000;transform:scaleX(0.772);transform-origin:0 0;-webkit-text-stroke:0.2px #000">0,1%</div>
<div class="t" style="left:801.271004375px;top:394.55px;font-size:8.8px;color:#000;transform:scaleX(0.796);transform-origin:0 0;-webkit-text-stroke:0.2px #000">1 465,1 МБ</div>
<div class="t" style="left:853.95189953125px;top:394.55px;font-size:8.8px;color:#000;transform:scaleX(0.810);transform-origin:0 0;-webkit-text-stroke:0.2px #000">0,1 МБ/с</div>
<div class="t" style="left:897.7968456250001px;top:394.55px;font-size:8.8px;color:#000;transform:scaleX(0.823);transform-origin:0 0;-webkit-text-stroke:0.2px #000">0 Мбит/с</div>
<div class="t" style="left:962.180546875px;top:394.55px;font-size:8.8px;color:#000;transform:scaleX(0.772);transform-origin:0 0;-webkit-text-stroke:0.2px #000">0%</div>
<div class="t" style="left:981px;top:394.55px;font-size:8.8px;color:#000;transform:scaleX(0.820);transform-origin:0 0;-webkit-text-stroke:0.15px #000">Графиче...</div>
<div class="t" style="left:1026px;top:394.55px;font-size:8.8px;color:#000;transform:scaleX(0.840);transform-origin:0 0;-webkit-text-stroke:0.15px #000">Очень низ...</div>
<div class="t" style="left:1077px;top:394.55px;font-size:8.8px;color:#000;transform:scaleX(0.821);transform-origin:0 0;-webkit-text-stroke:0.15px #000">Очень н</div>
<div class="a" style="left:752px;top:406.5px;width:45px;height:17.25px;background:#fff4c8;"></div>
<div class="a" style="left:797px;top:406.5px;width:45px;height:17.25px;background:#fff0bc;"></div>
<div class="a" style="left:842px;top:406.5px;width:45px;height:17.25px;background:#fff4d0;"></div>
<div class="a" style="left:887px;top:406.5px;width:45px;height:17.25px;background:#fff4d0;"></div>
<div class="a" style="left:932px;top:406.5px;width:45px;height:17.25px;background:#fff4d0;"></div>
<div class="a" style="left:977px;top:406.5px;width:45px;height:17.25px;background:#ffffff;"></div>
<div class="a" style="left:1022px;top:406.5px;width:51px;height:17.25px;background:#fdeab0;"></div>
<div class="a" style="left:1073px;top:406.5px;width:33px;height:17.25px;background:#fff4d0;"></div>
<svg class="a" style="left:539px;top:412.0px;" width="5" height="8" viewBox="0 0 5 8"><path d="M1 0.5 L4 3.8 L1 7" stroke="#555" fill="none" stroke-width="0.9"/></svg>
<svg class="a" style="left:551px;top:409.5px;" width="11" height="11" viewBox="0 0 11 11"><circle cx="5.5" cy="5.5" r="5" fill="#db4437"/><path d="M5.5 5.5 L1 8 A5 5 0 0 0 8.5 9.5 Z" fill="#0f9d58"/><path d="M5.5 5.5 L8.5 9.5 A5 5 0 0 0 10.4 4.2 L10.5 3.5 Z" fill="#f4b400"/><circle cx="5.5" cy="5.5" r="2.3" fill="#fff"/><circle cx="5.5" cy="5.5" r="1.7" fill="#4285f4"/></svg>
<div class="t" style="left:564px;top:411.8px;font-size:8.8px;color:#000;transform:scaleX(0.816);transform-origin:0 0;-webkit-text-stroke:0.15px #000">Google Chrome (41)</div>
<div class="t" style="left:776.51445703125px;top:411.8px;font-size:8.8px;color:#000;transform:scaleX(0.772);transform-origin:0 0;-webkit-text-stroke:0.2px #000">1,1%</div>
<div class="t" style="left:807.08044546875px;top:411.8px;font-size:8.8px;color:#000;transform:scaleX(0.796);transform-origin:0 0;-webkit-text-stroke:0.2px #000">928,9 МБ</div>
<div class="t" style="left:853.95189953125px;top:411.8px;font-size:8.8px;color:#000;transform:scaleX(0.810);transform-origin:0 0;-webkit-text-stroke:0.2px #000">2,6 МБ/с</div>
<div class="t" style="left:897.7968456250001px;top:411.8px;font-size:8.8px;color:#000;transform:scaleX(0.823);transform-origin:0 0;-webkit-text-stroke:0.2px #000">0 Мбит/с</div>
<div class="t" style="left:956.51445703125px;top:411.8px;font-size:8.8px;color:#000;transform:scaleX(0.772);transform-origin:0 0;-webkit-text-stroke:0.2px #000">0,1%</div>
<div class="t" style="left:981px;top:411.8px;font-size:8.8px;color:#000;transform:scaleX(0.820);transform-origin:0 0;-webkit-text-stroke:0.15px #000">Графиче...</div>
<div class="t" style="left:1026px;top:411.8px;font-size:8.8px;color:#000;transform:scaleX(0.840);transform-origin:0 0;-webkit-text-stroke:0.15px #000">Низкий</div>
<div class="t" style="left:1077px;top:411.8px;font-size:8.8px;color:#000;transform:scaleX(0.821);transform-origin:0 0;-webkit-text-stroke:0.15px #000">Очень н</div>
<div class="a" style="left:752px;top:423.75px;width:45px;height:17.25px;background:#fff4c8;"></div>
<div class="a" style="left:797px;top:423.75px;width:45px;height:17.25px;background:#fff4c8;"></div>
<div class="a" style="left:842px;top:423.75px;width:45px;height:17.25px;background:#fff4d0;"></div>
<div class="a" style="left:887px;top:423.75px;width:45px;height:17.25px;background:#fff4d0;"></div>
<div class="a" style="left:932px;top:423.75px;width:45px;height:17.25px;background:#fff4d0;"></div>
<div class="a" style="left:977px;top:423.75px;width:45px;height:17.25px;background:#ffffff;"></div>
<div class="a" style="left:1022px;top:423.75px;width:51px;height:17.25px;background:#fff4d0;"></div>
<div class="a" style="left:1073px;top:423.75px;width:33px;height:17.25px;background:#fff0bf;"></div>
<svg class="a" style="left:539px;top:429.25px;" width="5" height="8" viewBox="0 0 5 8"><path d="M1 0.5 L4 3.8 L1 7" stroke="#555" fill="none" stroke-width="0.9"/></svg>
<svg class="a" style="left:551px;top:426.75px;" width="11" height="11" viewBox="0 0 11 11"><rect x="0.5" y="1.5" width="10" height="8" fill="#fff" stroke="#666" stroke-width="0.9"/><rect x="2.5" y="4" width="2.5" height="4" fill="#1a5ab0"/></svg>
<div class="t" style="left:564px;top:429.05px;font-size:8.8px;color:#000;transform:scaleX(0.816);transform-origin:0 0;-webkit-text-stroke:0.15px #000">Antimalware Service Executable</div>
<div class="t" style="left:776.51445703125px;top:429.05px;font-size:8.8px;color:#000;transform:scaleX(0.772);transform-origin:0 0;-webkit-text-stroke:0.2px #000">0,1%</div>
<div class="t" style="left:810.8590771875px;top:429.05px;font-size:8.8px;color:#000;transform:scaleX(0.800);transform-origin:0 0;-webkit-text-stroke:0.2px #000">84,0 МБ</div>
<div class="t" style="left:853.95189953125px;top:429.05px;font-size:8.8px;color:#000;transform:scaleX(0.810);transform-origin:0 0;-webkit-text-stroke:0.2px #000">0,1 МБ/с</div>
<div class="t" style="left:897.7968456250001px;top:429.05px;font-size:8.8px;color:#000;transform:scaleX(0.823);transform-origin:0 0;-webkit-text-stroke:0.2px #000">0 Мбит/с</div>
<div class="t" style="left:962.180546875px;top:429.05px;font-size:8.8px;color:#000;transform:scaleX(0.772);transform-origin:0 0;-webkit-text-stroke:0.2px #000">0%</div>
<div class="t" style="left:1026px;top:429.05px;font-size:8.8px;color:#000;transform:scaleX(0.840);transform-origin:0 0;-webkit-text-stroke:0.15px #000">Очень низ...</div>
<div class="t" style="left:1077px;top:429.05px;font-size:8.8px;color:#000;transform:scaleX(0.821);transform-origin:0 0;-webkit-text-stroke:0.15px #000">Низкий</div>
<div class="a" style="left:752px;top:441.0px;width:45px;height:17.25px;background:#fff4c8;"></div>
<div class="a" style="left:797px;top:441.0px;width:45px;height:17.25px;background:#fff4c8;"></div>
<div class="a" style="left:842px;top:441.0px;width:45px;height:17.25px;background:#fff4d0;"></div>
<div class="a" style="left:887px;top:441.0px;width:45px;height:17.25px;background:#fff4d0;"></div>
<div class="a" style="left:932px;top:441.0px;width:45px;height:17.25px;background:#fbc65a;"></div>
<div class="a" style="left:977px;top:441.0px;width:45px;height:17.25px;background:#ffffff;"></div>
<div class="a" style="left:1022px;top:441.0px;width:51px;height:17.25px;background:#f9d27a;"></div>
<div class="a" style="left:1073px;top:441.0px;width:33px;height:17.25px;background:#fff0bf;"></div>
<svg class="a" style="left:551px;top:444.0px;" width="11" height="11" viewBox="0 0 11 11"><rect x="0.5" y="1.5" width="10" height="8" fill="#fff" stroke="#666" stroke-width="0.9"/><rect x="2.5" y="4" width="2.5" height="4" fill="#1a5ab0"/></svg>
<div class="t" style="left:564px;top:446.3px;font-size:8.8px;color:#000;transform:scaleX(0.845);transform-origin:0 0;-webkit-text-stroke:0.15px #000">Диспетчер окон рабочего стола</div>
<div class="t" style="left:776.51445703125px;top:446.3px;font-size:8.8px;color:#000;transform:scaleX(0.772);transform-origin:0 0;-webkit-text-stroke:0.2px #000">2,4%</div>
<div class="t" style="left:810.8590771875px;top:446.3px;font-size:8.8px;color:#000;transform:scaleX(0.800);transform-origin:0 0;-webkit-text-stroke:0.2px #000">74,3 МБ</div>
<div class="t" style="left:859.617989375px;top:446.3px;font-size:8.8px;color:#000;transform:scaleX(0.820);transform-origin:0 0;-webkit-text-stroke:0.2px #000">0 МБ/с</div>
<div class="t" style="left:897.7968456250001px;top:446.3px;font-size:8.8px;color:#000;transform:scaleX(0.823);transform-origin:0 0;-webkit-text-stroke:0.2px #000">0 Мбит/с</div>
<div class="t" style="left:952.7358253125px;top:446.3px;font-size:8.8px;color:#000;transform:scaleX(0.772);transform-origin:0 0;-webkit-text-stroke:0.2px #000">22,6%</div>
<div class="t" style="left:981px;top:446.3px;font-size:8.8px;color:#000;transform:scaleX(0.820);transform-origin:0 0;-webkit-text-stroke:0.15px #000">Графиче...</div>
<div class="t" style="left:1026px;top:446.3px;font-size:8.8px;color:#000;transform:scaleX(0.840);transform-origin:0 0;-webkit-text-stroke:0.15px #000">Умеренный</div>
<div class="t" style="left:1077px;top:446.3px;font-size:8.8px;color:#000;transform:scaleX(0.821);transform-origin:0 0;-webkit-text-stroke:0.15px #000">Низкий</div>
<div class="a" style="left:752px;top:458.25px;width:45px;height:17.25px;background:#fff4c8;"></div>
<div class="a" style="left:797px;top:458.25px;width:45px;height:17.25px;background:#fff4c8;"></div>
<div class="a" style="left:842px;top:458.25px;width:45px;height:17.25px;background:#fff4d0;"></div>
<div class="a" style="left:887px;top:458.25px;width:45px;height:17.25px;background:#fff4d0;"></div>
<div class="a" style="left:932px;top:458.25px;width:45px;height:17.25px;background:#fff4d0;"></div>
<div class="a" style="left:977px;top:458.25px;width:45px;height:17.25px;background:#ffffff;"></div>
<div class="a" style="left:1022px;top:458.25px;width:51px;height:17.25px;background:#fff4d0;"></div>
<div class="a" style="left:1073px;top:458.25px;width:33px;height:17.25px;background:#fff4d0;"></div>
<svg class="a" style="left:551px;top:461.25px;" width="11" height="11" viewBox="0 0 11 11"><rect x="0.5" y="0.5" width="10" height="10" rx="2" fill="#e0407a"/><rect x="2.5" y="2.5" width="6" height="6" rx="1" fill="#f8d0a0"/></svg>
<div class="t" style="left:564px;top:463.55px;font-size:8.8px;color:#000;transform:scaleX(0.816);transform-origin:0 0;-webkit-text-stroke:0.15px #000">Adobe CEF Helper</div>
<div class="t" style="left:776.51445703125px;top:463.55px;font-size:8.8px;color:#000;transform:scaleX(0.772);transform-origin:0 0;-webkit-text-stroke:0.2px #000">0,1%</div>
<div class="t" style="left:810.8590771875px;top:463.55px;font-size:8.8px;color:#000;transform:scaleX(0.800);transform-origin:0 0;-webkit-text-stroke:0.2px #000">72,0 МБ</div>
<div class="t" style="left:853.95189953125px;top:463.55px;font-size:8.8px;color:#000;transform:scaleX(0.810);transform-origin:0 0;-webkit-text-stroke:0.2px #000">0,1 МБ/с</div>
<div class="t" style="left:897.7968456250001px;top:463.55px;font-size:8.8px;color:#000;transform:scaleX(0.823);transform-origin:0 0;-webkit-text-stroke:0.2px #000">0 Мбит/с</div>
<div class="t" style="left:962.180546875px;top:463.55px;font-size:8.8px;color:#000;transform:scaleX(0.772);transform-origin:0 0;-webkit-text-stroke:0.2px #000">0%</div>
<div class="t" style="left:1026px;top:463.55px;font-size:8.8px;color:#000;transform:scaleX(0.840);transform-origin:0 0;-webkit-text-stroke:0.15px #000">Очень низ...</div>
<div class="t" style="left:1077px;top:463.55px;font-size:8.8px;color:#000;transform:scaleX(0.821);transform-origin:0 0;-webkit-text-stroke:0.15px #000">Очень н</div>
<div class="a" style="left:752px;top:475.5px;width:45px;height:17.25px;background:#fff4c8;"></div>
<div class="a" style="left:797px;top:475.5px;width:45px;height:17.25px;background:#fff4c8;"></div>
<div class="a" style="left:842px;top:475.5px;width:45px;height:17.25px;background:#fff4d0;"></div>
<div class="a" style="left:887px;top:475.5px;width:45px;height:17.25px;background:#fff4d0;"></div>
<div class="a" style="left:932px;top:475.5px;width:45px;height:17.25px;background:#fff4d0;"></div>
<div class="a" style="left:977px;top:475.5px;width:45px;height:17.25px;background:#ffffff;"></div>
<div class="a" style="left:1022px;top:475.5px;width:51px;height:17.25px;background:#fff4d0;"></div>
<div class="a" style="left:1073px;top:475.5px;width:33px;height:17.25px;background:#fff4d0;"></div>
<svg class="a" style="left:539px;top:481.0px;" width="5" height="8" viewBox="0 0 5 8"><path d="M1 0.5 L4 3.8 L1 7" stroke="#555" fill="none" stroke-width="0.9"/></svg>
<svg class="a" style="left:551px;top:478.5px;" width="11" height="11" viewBox="0 0 11 11"><path d="M0.5 2 H4 L5 3 H10.5 V10 H0.5 Z" fill="#f0c040"/><rect x="0.5" y="5" width="10" height="5" fill="#3a8ad8"/><rect x="3" y="6" width="5" height="4" fill="#f6d060"/></svg>
<div class="t" style="left:564px;top:480.8px;font-size:8.8px;color:#000;transform:scaleX(0.845);transform-origin:0 0;-webkit-text-stroke:0.15px #000">Проводник</div>
<div class="t" style="left:776.51445703125px;top:480.8px;font-size:8.8px;color:#000;transform:scaleX(0.772);transform-origin:0 0;-webkit-text-stroke:0.2px #000">0,6%</div>
<div class="t" style="left:810.8590771875px;top:480.8px;font-size:8.8px;color:#000;transform:scaleX(0.800);transform-origin:0 0;-webkit-text-stroke:0.2px #000">47,2 МБ</div>
<div class="t" style="left:853.95189953125px;top:480.8px;font-size:8.8px;color:#000;transform:scaleX(0.810);transform-origin:0 0;-webkit-text-stroke:0.2px #000">0,1 МБ/с</div>
<div class="t" style="left:897.7968456250001px;top:480.8px;font-size:8.8px;color:#000;transform:scaleX(0.823);transform-origin:0 0;-webkit-text-stroke:0.2px #000">0 Мбит/с</div>
<div class="t" style="left:962.180546875px;top:480.8px;font-size:8.8px;color:#000;transform:scaleX(0.772);transform-origin:0 0;-webkit-text-stroke:0.2px #000">0%</div>
<div class="t" style="left:1026px;top:480.8px;font-size:8.8px;color:#000;transform:scaleX(0.840);transform-origin:0 0;-webkit-text-stroke:0.15px #000">Очень низ...</div>
<div class="t" style="left:1077px;top:480.8px;font-size:8.8px;color:#000;transform:scaleX(0.821);transform-origin:0 0;-webkit-text-stroke:0.15px #000">Очень н</div>
<div class="a" style="left:752px;top:492.75px;width:45px;height:17.25px;background:#fff4c8;"></div>
<div class="a" style="left:797px;top:492.75px;width:45px;height:17.25px;background:#fff4c8;"></div>
<div class="a" style="left:842px;top:492.75px;width:45px;height:17.25px;background:#fff4d0;"></div>
<div class="a" style="left:887px;top:492.75px;width:45px;height:17.25px;background:#fff4d0;"></div>
<div class="a" style="left:932px;top:492.75px;width:45px;height:17.25px;background:#fdf0bf;"></div>
<div class="a" style="left:977px;top:492.75px;width:45px;height:17.25px;background:#ffffff;"></div>
<div class="a" style="left:1022px;top:492.75px;width:51px;height:17.25px;background:#fff4d0;"></div>
<div class="a" style="left:1073px;top:492.75px;width:33px;height:17.25px;background:#fff4d0;"></div>
<svg class="a" style="left:539px;top:498.25px;" width="5" height="8" viewBox="0 0 5 8"><path d="M1 0.5 L4 3.8 L1 7" stroke="#555" fill="none" stroke-width="0.9"/></svg>
<svg class="a" style="left:551px;top:495.75px;" width="11" height="11" viewBox="0 0 11 11"><rect x="0" y="0" width="11" height="11" rx="1" fill="#111"/><circle cx="5.5" cy="5.5" r="3" fill="none" stroke="#fff" stroke-width="1.1"/><path d="M3 3 L8 8" stroke="#fff"/></svg>
<div class="t" style="left:564px;top:498.05px;font-size:8.8px;color:#000;transform:scaleX(0.845);transform-origin:0 0;-webkit-text-stroke:0.15px #000">Набросок на фрагменте экран...</div>
<div class="t" style="left:776.51445703125px;top:498.05px;font-size:8.8px;color:#000;transform:scaleX(0.772);transform-origin:0 0;-webkit-text-stroke:0.2px #000">0,1%</div>
<div class="t" style="left:810.8590771875px;top:498.05px;font-size:8.8px;color:#000;transform:scaleX(0.800);transform-origin:0 0;-webkit-text-stroke:0.2px #000">39,1 МБ</div>
<div class="t" style="left:859.617989375px;top:498.05px;font-size:8.8px;color:#000;transform:scaleX(0.820);transform-origin:0 0;-webkit-text-stroke:0.2px #000">0 МБ/с</div>
<div class="t" style="left:897.7968456250001px;top:498.05px;font-size:8.8px;color:#000;transform:scaleX(0.823);transform-origin:0 0;-webkit-text-stroke:0.2px #000">0 Мбит/с</div>
<div class="t" style="left:956.51445703125px;top:498.05px;font-size:8.8px;color:#000;transform:scaleX(0.772);transform-origin:0 0;-webkit-text-stroke:0.2px #000">0,3%</div>
<div class="t" style="left:981px;top:498.05px;font-size:8.8px;color:#000;transform:scaleX(0.820);transform-origin:0 0;-webkit-text-stroke:0.15px #000">Графиче...</div>
<div class="t" style="left:1026px;top:498.05px;font-size:8.8px;color:#000;transform:scaleX(0.840);transform-origin:0 0;-webkit-text-stroke:0.15px #000">Очень низ...</div>
<div class="a" style="left:752px;top:510.0px;width:45px;height:17.25px;background:#fff4c8;"></div>
<div class="a" style="left:797px;top:510.0px;width:45px;height:17.25px;background:#fff4c8;"></div>
<div class="a" style="left:842px;top:510.0px;width:45px;height:17.25px;background:#fff4d0;"></div>
<div class="a" style="left:887px;top:510.0px;width:45px;height:17.25px;background:#fff4d0;"></div>
<div class="a" style="left:932px;top:510.0px;width:45px;height:17.25px;background:#fff4d0;"></div>
<div class="a" style="left:977px;top:510.0px;width:45px;height:17.25px;background:#ffffff;"></div>
<div class="a" style="left:1022px;top:510.0px;width:51px;height:17.25px;background:#fff4d0;"></div>
<div class="a" style="left:1073px;top:510.0px;width:33px;height:17.25px;background:#fff4d0;"></div>
<svg class="a" style="left:551px;top:513.0px;" width="11" height="11" viewBox="0 0 11 11"><rect x="0.5" y="1.5" width="10" height="8" rx="1" fill="#fff" stroke="#1e4f7a" stroke-width="1.1"/></svg>
<div class="t" style="left:564px;top:515.3px;font-size:8.8px;color:#000;transform:scaleX(0.816);transform-origin:0 0;-webkit-text-stroke:0.15px #000">Chromium host executable (32 ...</div>
<div class="t" style="left:782.180546875px;top:515.3px;font-size:8.8px;color:#000;transform:scaleX(0.772);transform-origin:0 0;-webkit-text-stroke:0.2px #000">0%</div>
<div class="t" style="left:810.8590771875px;top:515.3px;font-size:8.8px;color:#000;transform:scaleX(0.800);transform-origin:0 0;-webkit-text-stroke:0.2px #000">29,4 МБ</div>
<div class="t" style="left:859.617989375px;top:515.3px;font-size:8.8px;color:#000;transform:scaleX(0.820);transform-origin:0 0;-webkit-text-stroke:0.2px #000">0 МБ/с</div>
<div class="t" style="left:897.7968456250001px;top:515.3px;font-size:8.8px;color:#000;transform:scaleX(0.823);transform-origin:0 0;-webkit-text-stroke:0.2px #000">0 Мбит/с</div>
<div class="t" style="left:962.180546875px;top:515.3px;font-size:8.8px;color:#000;transform:scaleX(0.772);transform-origin:0 0;-webkit-text-stroke:0.2px #000">0%</div>
<div class="t" style="left:1026px;top:515.3px;font-size:8.8px;color:#000;transform:scaleX(0.840);transform-origin:0 0;-webkit-text-stroke:0.15px #000">Очень низ...</div>
<div class="t" style="left:1077px;top:515.3px;font-size:8.8px;color:#000;transform:scaleX(0.821);transform-origin:0 0;-webkit-text-stroke:0.15px #000">Очень н</div>
<div class="a" style="left:752px;top:527.25px;width:45px;height:17.25px;background:#fff4c8;"></div>
<div class="a" style="left:797px;top:527.25px;width:45px;height:17.25px;background:#fff4c8;"></div>
<div class="a" style="left:842px;top:527.25px;width:45px;height:17.25px;background:#fff4d0;"></div>
<div class="a" style="left:887px;top:527.25px;width:45px;height:17.25px;background:#fff4d0;"></div>
<div class="a" style="left:932px;top:527.25px;width:45px;height:17.25px;background:#fff4d0;"></div>
<div class="a" style="left:977px;top:527.25px;width:45px;height:17.25px;background:#ffffff;"></div>
<div class="a" style="left:1022px;top:527.25px;width:51px;height:17.25px;background:#fdeab0;"></div>
<div class="a" style="left:1073px;top:527.25px;width:33px;height:17.25px;background:#fff4d0;"></div>
<svg class="a" style="left:539px;top:532.75px;" width="5" height="8" viewBox="0 0 5 8"><path d="M1 0.5 L4 3.8 L1 7" stroke="#555" fill="none" stroke-width="0.9"/></svg>
<svg class="a" style="left:551px;top:530.25px;" width="11" height="11" viewBox="0 0 11 11"><rect x="0.5" y="1.5" width="10" height="8" fill="#dde" stroke="#888" stroke-width="0.8"/><path d="M1.5 7 L4 4.5 L6 6.5 L9.5 3" stroke="#2a8a60" fill="none"/></svg>
<div class="t" style="left:564px;top:532.55px;font-size:8.8px;color:#000;transform:scaleX(0.845);transform-origin:0 0;-webkit-text-stroke:0.15px #000">Диспетчер задач</div>
<div class="t" style="left:776.51445703125px;top:532.55px;font-size:8.8px;color:#000;transform:scaleX(0.772);transform-origin:0 0;-webkit-text-stroke:0.2px #000">0,9%</div>
<div class="t" style="left:810.8590771875px;top:532.55px;font-size:8.8px;color:#000;transform:scaleX(0.800);transform-origin:0 0;-webkit-text-stroke:0.2px #000">27,7 МБ</div>
<div class="t" style="left:859.617989375px;top:532.55px;font-size:8.8px;color:#000;transform:scaleX(0.820);transform-origin:0 0;-webkit-text-stroke:0.2px #000">0 МБ/с</div>
<div class="t" style="left:897.7968456250001px;top:532.55px;font-size:8.8px;color:#000;transform:scaleX(0.823);transform-origin:0 0;-webkit-text-stroke:0.2px #000">0 Мбит/с</div>
<div class="t" style="left:962.180546875px;top:532.55px;font-size:8.8px;color:#000;transform:scaleX(0.772);transform-origin:0 0;-webkit-text-stroke:0.2px #000">0%</div>
<div class="t" style="left:1026px;top:532.55px;font-size:8.8px;color:#000;transform:scaleX(0.840);transform-origin:0 0;-webkit-text-stroke:0.15px #000">Низкий</div>
<div class="t" style="left:1077px;top:532.55px;font-size:8.8px;color:#000;transform:scaleX(0.821);transform-origin:0 0;-webkit-text-stroke:0.15px #000">Очень н</div>
<div class="a" style="left:752px;top:544.5px;width:45px;height:17.25px;background:#fff4c8;"></div>
<div class="a" style="left:797px;top:544.5px;width:45px;height:17.25px;background:#fff4c8;"></div>
<div class="a" style="left:842px;top:544.5px;width:45px;height:17.25px;background:#fff4d0;"></div>
<div class="a" style="left:887px;top:544.5px;width:45px;height:17.25px;background:#fff4d0;"></div>
<div class="a" style="left:932px;top:544.5px;width:45px;height:17.25px;background:#fff4d0;"></div>
<div class="a" style="left:977px;top:544.5px;width:45px;height:17.25px;background:#ffffff;"></div>
<div class="a" style="left:1022px;top:544.5px;width:51px;height:17.25px;background:#fff4d0;"></div>
<div class="a" style="left:1073px;top:544.5px;width:33px;height:17.25px;background:#fff4d0;"></div>
<svg class="a" style="left:539px;top:550.0px;" width="5" height="8" viewBox="0 0 5 8"><path d="M1 0.5 L4 3.8 L1 7" stroke="#555" fill="none" stroke-width="0.9"/></svg>
<svg class="a" style="left:551px;top:547.5px;" width="11" height="11" viewBox="0 0 11 11"><rect x="0" y="0" width="11" height="11" rx="1" fill="#111"/><circle cx="5.5" cy="5.5" r="3.3" fill="none" stroke="#fff" stroke-width="1.1"/><path d="M4 8 L8 2.5" stroke="#fff"/></svg>
<div class="t" style="left:564px;top:549.8px;font-size:8.8px;color:#000;transform:scaleX(0.816);transform-origin:0 0;-webkit-text-stroke:0.15px #000">Chaos Software Ltd. Application...</div>
<div class="t" style="left:782.180546875px;top:549.8px;font-size:8.8px;color:#000;transform:scaleX(0.772);transform-origin:0 0;-webkit-text-stroke:0.2px #000">0%</div>
<div class="t" style="left:810.8590771875px;top:549.8px;font-size:8.8px;color:#000;transform:scaleX(0.800);transform-origin:0 0;-webkit-text-stroke:0.2px #000">25,6 МБ</div>
<div class="t" style="left:859.617989375px;top:549.8px;font-size:8.8px;color:#000;transform:scaleX(0.820);transform-origin:0 0;-webkit-text-stroke:0.2px #000">0 МБ/с</div>
<div class="t" style="left:897.7968456250001px;top:549.8px;font-size:8.8px;color:#000;transform:scaleX(0.823);transform-origin:0 0;-webkit-text-stroke:0.2px #000">0 Мбит/с</div>
<div class="t" style="left:962.180546875px;top:549.8px;font-size:8.8px;color:#000;transform:scaleX(0.772);transform-origin:0 0;-webkit-text-stroke:0.2px #000">0%</div>
<div class="t" style="left:1026px;top:549.8px;font-size:8.8px;color:#000;transform:scaleX(0.840);transform-origin:0 0;-webkit-text-stroke:0.15px #000">Очень низ...</div>
<div class="t" style="left:1077px;top:549.8px;font-size:8.8px;color:#000;transform:scaleX(0.821);transform-origin:0 0;-webkit-text-stroke:0.15px #000">Очень н</div>
<div class="a" style="left:752px;top:561.75px;width:45px;height:5.25px;background:#fff4c8;"></div>
<div class="a" style="left:797px;top:561.75px;width:45px;height:5.25px;background:#fff4c8;"></div>
<div class="a" style="left:842px;top:561.75px;width:45px;height:5.25px;background:#fff4d0;"></div>
<div class="a" style="left:887px;top:561.75px;width:45px;height:5.25px;background:#fff4d0;"></div>
<div class="a" style="left:932px;top:561.75px;width:45px;height:5.25px;background:#fff4d0;"></div>
<div class="a" style="left:977px;top:561.75px;width:45px;height:5.25px;background:#ffffff;"></div>
<div class="a" style="left:1022px;top:561.75px;width:51px;height:5.25px;background:#fff4d0;"></div>
<div class="a" style="left:1073px;top:561.75px;width:33px;height:5.25px;background:#fff4d0;"></div>
<svg class="a" style="left:740px;top:496px;" width="8" height="11" viewBox="0 0 8 11"><circle cx="4" cy="4" r="3.2" fill="none" stroke="#2a9a4a" stroke-width="1"/><path d="M4 7 V11" stroke="#2a9a4a"/></svg>
<div class="a" style="left:842px;top:389px;width:1px;height:178px;background:rgba(120,90,0,0.07);"></div>
<div class="a" style="left:887px;top:389px;width:1px;height:178px;background:rgba(120,90,0,0.07);"></div>
<div class="a" style="left:932px;top:389px;width:1px;height:178px;background:rgba(120,90,0,0.07);"></div>
<div class="a" style="left:977px;top:389px;width:1px;height:178px;background:rgba(120,90,0,0.07);"></div>
<div class="a" style="left:1022px;top:389px;width:1px;height:178px;background:rgba(120,90,0,0.07);"></div>
<div class="a" style="left:1073px;top:389px;width:1px;height:178px;background:rgba(120,90,0,0.07);"></div>
<div class="a" style="left:752px;top:345px;width:1px;height:222px;background:#f2a888;"></div>
<div class="a" style="left:796px;top:345px;width:1px;height:222px;background:#f2a888;"></div>
<div class="a" style="left:1106px;top:372px;width:11px;height:195px;background:#f0f0f0;"></div>
<svg class="a" style="left:1108px;top:375px;" width="7" height="5" viewBox="0 0 7 5"><path d="M0.5 4.5 L3.5 1 L6.5 4.5" stroke="#333" fill="none" stroke-width="1.2"/></svg>
<div class="a" style="left:1107px;top:384px;width:9px;height:183px;background:#dadada;"></div></body></html>
